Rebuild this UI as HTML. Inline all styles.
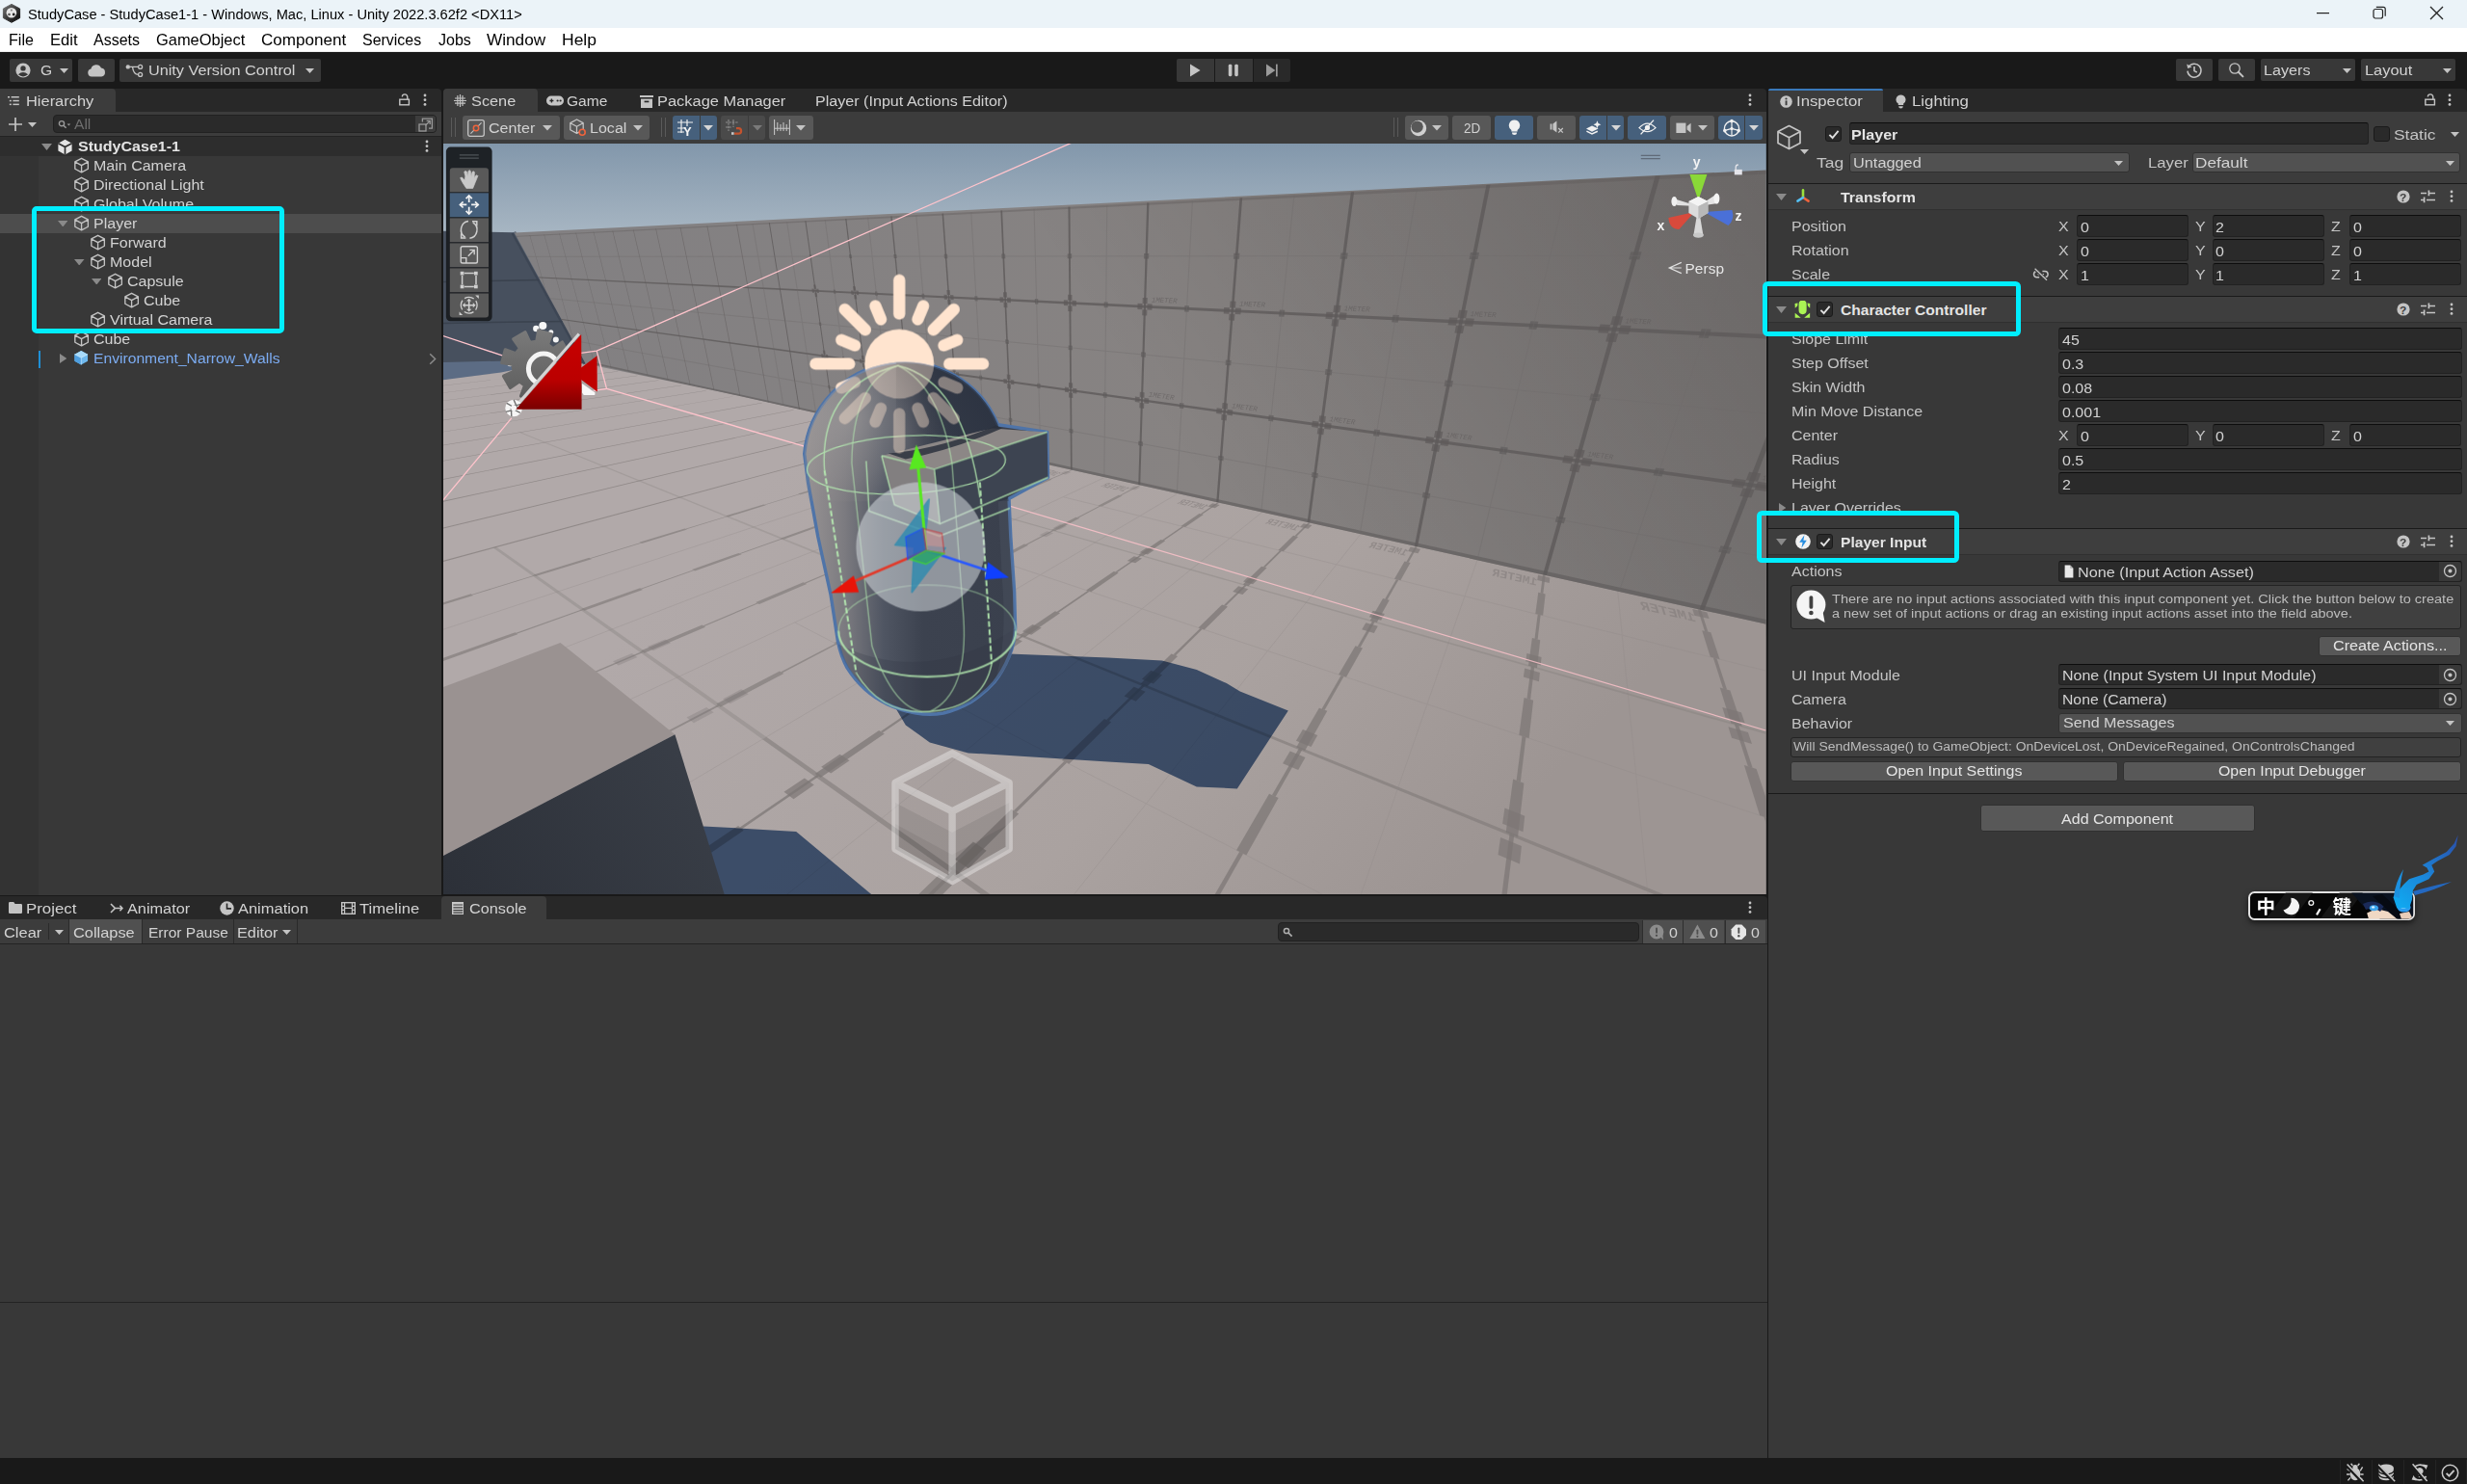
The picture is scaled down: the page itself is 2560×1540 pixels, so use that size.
<!DOCTYPE html>
<html><head><meta charset="utf-8"><title>Unity</title>
<style>
html,body{margin:0;padding:0;background:#191919}
body{width:2560px;height:1540px;position:relative;overflow:hidden;font-family:"Liberation Sans",sans-serif}
body>div,body>span,body>svg{position:absolute;display:block}
body>span{white-space:nowrap}
</style></head><body>
<div style="left:0px;top:0px;width:2560px;height:28.7px;background:#ebf3f8;"></div>
<svg style="left:0px;top:0px;" width="26" height="28" viewBox="0 0 26 28"><defs><linearGradient id="ulg" x1="0" y1="0" x2="1" y2="1"><stop offset="0" stop-color="#7a7a7a"/><stop offset=".5" stop-color="#3a3a3a"/><stop offset="1" stop-color="#050505"/></linearGradient></defs><path d="M12 4.4 20.6 9V18.6L12 23.3 3.4 18.6V9Z" fill="url(#ulg)" stroke="url(#ulg)" stroke-width="1" stroke-linejoin="round"/><circle cx="11.9" cy="13.2" r="5.3" fill="#e6e6e6"/><circle cx="11.9" cy="10.6" r="1.1" fill="#8a8a8a"/><circle cx="9.5" cy="15" r="1.3" fill="#555"/><circle cx="14.2" cy="15" r="1.4" fill="#252525"/></svg>
<span style="left:29.2px;top:5.3px;line-height:20px;font-size:15.2px;color:#000;transform:scaleX(0.9630);transform-origin:0 50%;">StudyCase - StudyCase1-1 - Windows, Mac, Linux - Unity 2022.3.62f2 &lt;DX11&gt;</span>
<svg style="left:2404px;top:13px;" width="14" height="2" viewBox="0 0 14 2"><rect width="13" height="1.2" fill="#222"/></svg>
<svg style="left:2462px;top:6px;" width="15" height="15" viewBox="0 0 15 15"><rect x="1" y="3.5" width="9.5" height="9.5" rx="2" fill="none" stroke="#222" stroke-width="1.2"/><path d="M3.8 1.3H11.2Q13.2 1.3 13.2 3.3V10.7" fill="none" stroke="#222" stroke-width="1.2"/></svg>
<svg style="left:2521px;top:6px;" width="15" height="15" viewBox="0 0 15 15"><path d="M1 1 14 14M14 1 1 14" stroke="#222" stroke-width="1.3"/></svg>
<div style="left:0px;top:28.7px;width:2560px;height:25.3px;background:#ffffff;"></div>
<div style="left:0px;top:52.8px;width:2560px;height:1.2px;background:#ededed;"></div>
<span style="left:8.5px;top:31.6px;line-height:20px;font-size:15.9px;color:#000;transform:scaleX(1.0110);transform-origin:0 50%;">File</span>
<span style="left:51.6px;top:31.6px;line-height:20px;font-size:15.9px;color:#000;transform:scaleX(1.0475);transform-origin:0 50%;">Edit</span>
<span style="left:97.2px;top:31.6px;line-height:20px;font-size:15.9px;color:#000;transform:scaleX(1.0060);transform-origin:0 50%;">Assets</span>
<span style="left:162.1px;top:31.6px;line-height:20px;font-size:15.9px;color:#000;transform:scaleX(1.0342);transform-origin:0 50%;">GameObject</span>
<span style="left:271.1px;top:31.6px;line-height:20px;font-size:15.9px;color:#000;transform:scaleX(1.0755);transform-origin:0 50%;">Component</span>
<span style="left:376.1px;top:31.6px;line-height:20px;font-size:15.9px;color:#000;transform:scaleX(1.0038);transform-origin:0 50%;">Services</span>
<span style="left:454.5px;top:31.6px;line-height:20px;font-size:15.9px;color:#000;transform:scaleX(1.0094);transform-origin:0 50%;">Jobs</span>
<span style="left:505px;top:31.6px;line-height:20px;font-size:15.9px;color:#000;transform:scaleX(1.0822);transform-origin:0 50%;">Window</span>
<span style="left:583.4px;top:31.6px;line-height:20px;font-size:15.9px;color:#000;transform:scaleX(1.1009);transform-origin:0 50%;">Help</span>
<div style="left:0px;top:54px;width:2560px;height:38px;background:#191919;"></div>
<div style="left:10px;top:61px;width:65px;height:23.5px;background:#383838;border-radius:2px"></div>
<svg style="left:16px;top:64.5px;" width="16" height="16" viewBox="0 0 16 16"><circle cx="8" cy="8" r="7.6" fill="#c4c4c4"/><circle cx="8" cy="5.9" r="2.7" fill="#383838"/><path d="M2.9 12.3Q8 7.6 13.1 12.3Q8 16.5 2.9 12.3Z" fill="#383838"/></svg>
<span style="left:42px;top:63px;line-height:20px;font-size:15px;color:#d2d2d2;transform:scaleX(1.0400);transform-origin:0 50%;">G</span>
<svg style="left:62px;top:70.5px;" width="9" height="5" viewBox="0 0 9 5"><path d="M0 0H9L4.5 5Z" fill="#c4c4c4"/></svg>
<div style="left:81px;top:61px;width:37.8px;height:23.5px;background:#383838;border-radius:2px"></div>
<svg style="left:90px;top:66px;" width="20" height="14" viewBox="0 0 20 14"><path d="M5 13.5a4 4 0 0 1-.6-7.9A5.6 5.6 0 0 1 15 4.6a4.5 4.5 0 0 1 .3 8.9Z" fill="#c4c4c4"/></svg>
<div style="left:124px;top:61px;width:208.8px;height:23.5px;background:#383838;border-radius:2px"></div>
<svg style="left:129.5px;top:65.5px;" width="19" height="15" viewBox="0 0 19 15"><circle cx="2.8" cy="3.4" r="2.2" fill="#c4c4c4"/><circle cx="15.6" cy="3.4" r="2" fill="none" stroke="#c4c4c4" stroke-width="1.3"/><circle cx="15.6" cy="11.4" r="2" fill="none" stroke="#c4c4c4" stroke-width="1.3"/><path d="M4.5 3.4H13.4M7.5 3.4Q8.5 11.4 13.4 11.4" fill="none" stroke="#c4c4c4" stroke-width="1.3"/></svg>
<span style="left:154.3px;top:63px;line-height:20px;font-size:15.4px;color:#d2d2d2;transform:scaleX(1.0543);transform-origin:0 50%;">Unity Version Control</span>
<svg style="left:317.2px;top:70.5px;" width="9" height="5" viewBox="0 0 9 5"><path d="M0 0H9L4.5 5Z" fill="#c4c4c4"/></svg>
<div style="left:1221px;top:60.5px;width:39px;height:24.3px;background:#383838;border-radius:2px 0 0 2px"></div>
<div style="left:1261px;top:60.5px;width:39px;height:24.3px;background:#383838;"></div>
<div style="left:1301px;top:60.5px;width:38.3px;height:24.3px;background:#292929;border-radius:0 2px 2px 0"></div>
<svg style="left:1234px;top:66px;" width="13" height="14" viewBox="0 0 13 14"><path d="M1 .6V13.4L11.6 7Z" fill="#c4c4c4"/></svg>
<svg style="left:1274px;top:66px;" width="12" height="14" viewBox="0 0 12 14"><rect x=".8" y=".8" width="3.6" height="12.4" rx="1.4" fill="#c4c4c4"/><rect x="7.2" y=".8" width="3.6" height="12.4" rx="1.4" fill="#c4c4c4"/></svg>
<svg style="left:1313px;top:66px;" width="14" height="14" viewBox="0 0 14 14"><path d="M1 .6V13.4L10.4 7Z" fill="#9a9a9a"/><rect x="11" y=".6" width="1.7" height="12.8" fill="#9a9a9a"/></svg>
<div style="left:2258px;top:61px;width:38px;height:23.2px;background:#383838;border-radius:2px"></div>
<svg style="left:2268px;top:64px;" width="18" height="18" viewBox="0 0 18 18"><path d="M3.2 5.2A7 7 0 1 1 2 9.6" fill="none" stroke="#c4c4c4" stroke-width="1.5"/><path d="M1.2 2.4 2.2 7 6.6 5.6Z" fill="#c4c4c4"/><path d="M9 5V9.6L11.8 11" fill="none" stroke="#c4c4c4" stroke-width="1.6"/></svg>
<div style="left:2302px;top:61px;width:38px;height:23.2px;background:#383838;border-radius:2px"></div>
<svg style="left:2312px;top:64px;" width="18" height="18" viewBox="0 0 18 18"><circle cx="7" cy="7" r="5.2" fill="none" stroke="#c4c4c4" stroke-width="1.3"/><path d="M10.8 10.8 15.4 15.4" stroke="#c4c4c4" stroke-width="2" stroke-linecap="round"/></svg>
<div style="left:2346px;top:61px;width:98px;height:23.2px;background:#383838;border-radius:2px"></div>
<span style="left:2349.4px;top:63.2px;line-height:20px;font-size:15.4px;color:#d2d2d2;transform:scaleX(1.0493);transform-origin:0 50%;">Layers</span>
<svg style="left:2431px;top:70.5px;" width="9" height="5" viewBox="0 0 9 5"><path d="M0 0H9L4.5 5Z" fill="#c4c4c4"/></svg>
<div style="left:2450px;top:61px;width:98px;height:23.2px;background:#383838;border-radius:2px"></div>
<span style="left:2453.5px;top:63.2px;line-height:20px;font-size:15.4px;color:#d2d2d2;transform:scaleX(1.0642);transform-origin:0 50%;">Layout</span>
<svg style="left:2534.8px;top:70.5px;" width="9" height="5" viewBox="0 0 9 5"><path d="M0 0H9L4.5 5Z" fill="#c4c4c4"/></svg>
<div style="left:0px;top:92px;width:2560px;height:1421px;background:#191919;"></div>
<div style="left:0px;top:92.1px;width:457.6px;height:23.9px;background:#282828;border-radius:0 4px 0 0"></div>
<div style="left:0px;top:92.1px;width:119.8px;height:23.9px;background:#3c3c3c;border-radius:0 4px 0 0"></div>
<svg style="left:8px;top:99px;" width="12" height="11" viewBox="0 0 12 11"><g fill="#c4c4c4"><rect x="0" y="1" width="2" height="1.5"/><rect x="3.6" y="1" width="8.2" height="1.5"/><rect x="1.8" y="4.8" width="2" height="1.5"/><rect x="5.4" y="4.8" width="6.4" height="1.5"/><rect x="1.8" y="8.6" width="2" height="1.5"/><rect x="5.4" y="8.6" width="6.4" height="1.5"/></g></svg>
<span style="left:27.2px;top:95.2px;line-height:20px;font-size:15.4px;color:#d2d2d2;transform:scaleX(1.0669);transform-origin:0 50%;">Hierarchy</span>
<svg style="left:414px;top:97px;" width="12" height="13" viewBox="0 0 12 13"><rect x=".8" y="6.2" width="9.6" height="5.6" fill="none" stroke="#c4c4c4" stroke-width="1.4"/><path d="M3.4 3.6Q3.4 .9 6 .9T8.8 3.8V6" fill="none" stroke="#c4c4c4" stroke-width="1.4"/></svg>
<svg style="left:439px;top:96.9px;" width="4" height="13.4" viewBox="0 0 4 13.4"><circle cx="2" cy="2" r="1.4" fill="#c4c4c4"/><circle cx="2" cy="6.7" r="1.4" fill="#c4c4c4"/><circle cx="2" cy="11.4" r="1.4" fill="#c4c4c4"/></svg>
<div style="left:0px;top:116px;width:457.6px;height:25.5px;background:#3c3c3c;"></div>
<div style="left:0px;top:141px;width:457.6px;height:1px;background:#232323;"></div>
<svg style="left:8px;top:120.8px;" width="16" height="16" viewBox="0 0 16 16"><path d="M8 1V15M1 8H15" stroke="#c4c4c4" stroke-width="1.7"/></svg>
<svg style="left:29px;top:126.5px;" width="9" height="5" viewBox="0 0 9 5"><path d="M0 0H9L4.5 5Z" fill="#c4c4c4"/></svg>
<div style="left:54.5px;top:119.3px;width:398.2px;height:18.7px;background:#2a2a2a;border-radius:4px;border:1px solid #212121;box-sizing:border-box"></div>
<svg style="left:60px;top:124px;" width="14" height="11" viewBox="0 0 14 11"><circle cx="4" cy="4.2" r="2.6" fill="none" stroke="#9a9a9a" stroke-width="1.4"/><path d="M6 6.2 8.6 8.8" stroke="#9a9a9a" stroke-width="1.5"/><path d="M9.6 4.4h3.6l-1.8 2z" fill="#9a9a9a"/></svg>
<span style="left:76.5px;top:119.4px;line-height:20px;font-size:15px;color:#6e6e6e;transform:scaleX(1.0400);transform-origin:0 50%;">All</span>
<div style="left:431px;top:120.3px;width:20.7px;height:16.7px;background:#3d3d3d;border-radius:0 3px 3px 0"></div>
<svg style="left:434px;top:121.5px;" width="16" height="15" viewBox="0 0 16 15"><rect x="1" y="7" width="7" height="7" fill="none" stroke="#9a9a9a" stroke-width="1.3"/><path d="M4.4 4.4V1.2H14.4V11.2H11" fill="none" stroke="#9a9a9a" stroke-width="1.3"/><path d="M7.4 8.2 12 3.6M8.6 3.4H12.2V7" fill="none" stroke="#9a9a9a" stroke-width="1.3"/></svg>
<div style="left:0px;top:142px;width:457.6px;height:786.5px;background:#383838;"></div>
<div style="left:0px;top:142px;width:40px;height:786.5px;background:#333333;"></div>
<div style="left:0px;top:142px;width:457.6px;height:19.5px;background:#2d2d2d;"></div>
<div style="left:0px;top:222px;width:457.6px;height:19.7px;background:#4d4d4d;"></div>
<svg style="left:42.7px;top:148.5px;" width="11" height="7" viewBox="0 0 11 7"><path d="M0 0H11L5.5 7Z" fill="#8a8a8a"/></svg>
<svg style="left:59px;top:143.5px;" width="17" height="17" viewBox="0 0 17 17"><path d="M8.5 .8 15.6 4.8V12.6L8.5 16.6 1.4 12.6V4.8Z" fill="#e4e4e4"/><path d="M8.5 8.6V16.6M8.5 8.6 1.4 4.8M8.5 8.6 15.6 4.8" stroke="#2d2d2d" stroke-width="1.7"/></svg>
<span style="left:80.7px;top:142.1px;line-height:20px;font-size:15.4px;color:#e4e4e4;font-weight:bold;transform:scaleX(1.0408);transform-origin:0 50%;">StudyCase1-1</span>
<svg style="left:441px;top:145.3px;" width="4" height="13.4" viewBox="0 0 4 13.4"><circle cx="2" cy="2" r="1.4" fill="#c4c4c4"/><circle cx="2" cy="6.7" r="1.4" fill="#c4c4c4"/><circle cx="2" cy="11.4" r="1.4" fill="#c4c4c4"/></svg>
<svg style="left:75.6px;top:162.9px;" width="17.2" height="17.2" viewBox="0 0 16 16"><path d="M8 1.2 14.3 4.6V11.4L8 14.8 1.7 11.4V4.6Z M1.9 4.7 8 8 14.1 4.7 M8 8V14.6" fill="none" stroke="#c4c4c4" stroke-width="1.25" stroke-linejoin="round"/></svg>
<span style="left:96.7px;top:162.2px;line-height:20px;font-size:15.4px;color:#d2d2d2;transform:scaleX(1.0400);transform-origin:0 50%;">Main Camera</span>
<svg style="left:75.6px;top:182.7px;" width="17.2" height="17.2" viewBox="0 0 16 16"><path d="M8 1.2 14.3 4.6V11.4L8 14.8 1.7 11.4V4.6Z M1.9 4.7 8 8 14.1 4.7 M8 8V14.6" fill="none" stroke="#c4c4c4" stroke-width="1.25" stroke-linejoin="round"/></svg>
<span style="left:96.7px;top:182px;line-height:20px;font-size:15.4px;color:#d2d2d2;transform:scaleX(1.0400);transform-origin:0 50%;">Directional Light</span>
<svg style="left:75.6px;top:202.5px;" width="17.2" height="17.2" viewBox="0 0 16 16"><path d="M8 1.2 14.3 4.6V11.4L8 14.8 1.7 11.4V4.6Z M1.9 4.7 8 8 14.1 4.7 M8 8V14.6" fill="none" stroke="#c4c4c4" stroke-width="1.25" stroke-linejoin="round"/></svg>
<span style="left:96.7px;top:201.8px;line-height:20px;font-size:15.4px;color:#d2d2d2;transform:scaleX(1.0400);transform-origin:0 50%;">Global Volume</span>
<svg style="left:75.6px;top:222.7px;" width="17.2" height="17.2" viewBox="0 0 16 16"><path d="M8 1.2 14.3 4.6V11.4L8 14.8 1.7 11.4V4.6Z M1.9 4.7 8 8 14.1 4.7 M8 8V14.6" fill="none" stroke="#c4c4c4" stroke-width="1.25" stroke-linejoin="round"/></svg>
<span style="left:96.7px;top:222px;line-height:20px;font-size:15.4px;color:#d2d2d2;transform:scaleX(1.0400);transform-origin:0 50%;">Player</span>
<svg style="left:59.85px;top:228.95px;" width="10.5" height="6.5" viewBox="0 0 10.5 6.5"><path d="M0 0H10.5L5.25 6.5Z" fill="#8a8a8a"/></svg>
<svg style="left:93.1px;top:242.8px;" width="17.2" height="17.2" viewBox="0 0 16 16"><path d="M8 1.2 14.3 4.6V11.4L8 14.8 1.7 11.4V4.6Z M1.9 4.7 8 8 14.1 4.7 M8 8V14.6" fill="none" stroke="#c4c4c4" stroke-width="1.25" stroke-linejoin="round"/></svg>
<span style="left:114.2px;top:242.1px;line-height:20px;font-size:15.4px;color:#d2d2d2;transform:scaleX(1.0400);transform-origin:0 50%;">Forward</span>
<svg style="left:93.1px;top:262.7px;" width="17.2" height="17.2" viewBox="0 0 16 16"><path d="M8 1.2 14.3 4.6V11.4L8 14.8 1.7 11.4V4.6Z M1.9 4.7 8 8 14.1 4.7 M8 8V14.6" fill="none" stroke="#c4c4c4" stroke-width="1.25" stroke-linejoin="round"/></svg>
<span style="left:114.2px;top:262px;line-height:20px;font-size:15.4px;color:#d2d2d2;transform:scaleX(1.0400);transform-origin:0 50%;">Model</span>
<svg style="left:77.35px;top:268.95px;" width="10.5" height="6.5" viewBox="0 0 10.5 6.5"><path d="M0 0H10.5L5.25 6.5Z" fill="#8a8a8a"/></svg>
<svg style="left:110.6px;top:282.7px;" width="17.2" height="17.2" viewBox="0 0 16 16"><path d="M8 1.2 14.3 4.6V11.4L8 14.8 1.7 11.4V4.6Z M1.9 4.7 8 8 14.1 4.7 M8 8V14.6" fill="none" stroke="#c4c4c4" stroke-width="1.25" stroke-linejoin="round"/></svg>
<span style="left:131.7px;top:282px;line-height:20px;font-size:15.4px;color:#d2d2d2;transform:scaleX(1.0400);transform-origin:0 50%;">Capsule</span>
<svg style="left:94.85px;top:288.95px;" width="10.5" height="6.5" viewBox="0 0 10.5 6.5"><path d="M0 0H10.5L5.25 6.5Z" fill="#8a8a8a"/></svg>
<svg style="left:128.1px;top:302.7px;" width="17.2" height="17.2" viewBox="0 0 16 16"><path d="M8 1.2 14.3 4.6V11.4L8 14.8 1.7 11.4V4.6Z M1.9 4.7 8 8 14.1 4.7 M8 8V14.6" fill="none" stroke="#c4c4c4" stroke-width="1.25" stroke-linejoin="round"/></svg>
<span style="left:149.2px;top:302px;line-height:20px;font-size:15.4px;color:#d2d2d2;transform:scaleX(1.0400);transform-origin:0 50%;">Cube</span>
<svg style="left:93.1px;top:322.7px;" width="17.2" height="17.2" viewBox="0 0 16 16"><path d="M8 1.2 14.3 4.6V11.4L8 14.8 1.7 11.4V4.6Z M1.9 4.7 8 8 14.1 4.7 M8 8V14.6" fill="none" stroke="#c4c4c4" stroke-width="1.25" stroke-linejoin="round"/></svg>
<span style="left:114.2px;top:322px;line-height:20px;font-size:15.4px;color:#d2d2d2;transform:scaleX(1.0400);transform-origin:0 50%;">Virtual Camera</span>
<svg style="left:75.6px;top:342.7px;" width="17.2" height="17.2" viewBox="0 0 16 16"><path d="M8 1.2 14.3 4.6V11.4L8 14.8 1.7 11.4V4.6Z M1.9 4.7 8 8 14.1 4.7 M8 8V14.6" fill="none" stroke="#c4c4c4" stroke-width="1.25" stroke-linejoin="round"/></svg>
<span style="left:96.7px;top:342px;line-height:20px;font-size:15.4px;color:#d2d2d2;transform:scaleX(1.0400);transform-origin:0 50%;">Cube</span>
<div style="left:40px;top:364px;width:2px;height:18px;background:#1f8fd6;"></div>
<svg style="left:61.85px;top:367px;" width="7.5" height="10" viewBox="0 0 7.5 10"><path d="M0 0V10L7.5 5Z" fill="#8a8a8a"/></svg>
<svg style="left:75.9px;top:363.4px;" width="16.5" height="16.5" viewBox="0 0 16 16"><path d="M8 1 14.6 4.5V11.5L8 15 1.4 11.5V4.5Z" fill="#6fb9ee"/><path d="M8 1 14.6 4.5 8 8 1.4 4.5Z" fill="#a7dbfb"/><path d="M8 8V15L1.4 11.5V4.5Z" fill="#4f9fe0"/><path d="M1.4 4.5 8 8 14.6 4.5M8 8V15" stroke="#d8f0ff" stroke-width=".6" fill="none"/></svg>
<span style="left:96.5px;top:362px;line-height:20px;font-size:15.4px;color:#7cacf2;transform:scaleX(1.0175);transform-origin:0 50%;">Environment_Narrow_Walls</span>
<svg style="left:445px;top:365.5px;" width="8" height="13" viewBox="0 0 8 13"><path d="M1.2 1.2 6.6 6.5 1.2 11.8" fill="none" stroke="#8a8a8a" stroke-width="1.5"/></svg>
<div style="left:32.6px;top:214px;width:262.4px;height:132.1px;border:5.2px solid #00eeff;border-radius:5px;box-sizing:border-box"></div>
<svg style="left:460.2px;top:148.6px" width="1372.6" height="779.6" viewBox="460.2 148.6 1372.6 779.6"><defs><linearGradient id="sky" x1="0" y1="0" x2="0" y2="1"><stop offset="0" stop-color="#8297ab"/><stop offset="1" stop-color="#abb9c5"/></linearGradient><linearGradient id="wall" gradientUnits="userSpaceOnUse" x1="534" y1="0" x2="1833" y2="0"><stop offset="0" stop-color="#828082"/><stop offset=".55" stop-color="#878382"/><stop offset="1" stop-color="#858180"/></linearGradient><linearGradient id="walld" gradientUnits="userSpaceOnUse" x1="1800" y1="170" x2="1250" y2="520"><stop offset="0" stop-color="#000" stop-opacity=".2"/><stop offset=".5" stop-color="#000" stop-opacity=".1"/><stop offset="1" stop-color="#000" stop-opacity="0"/></linearGradient><linearGradient id="floor" gradientUnits="userSpaceOnUse" x1="900" y1="380" x2="1500" y2="928"><stop offset="0" stop-color="#b1a9a9"/><stop offset=".6" stop-color="#aaa2a0"/><stop offset="1" stop-color="#9d9593"/></linearGradient><linearGradient id="cubef" gradientUnits="userSpaceOnUse" x1="460" y1="928" x2="720" y2="780"><stop offset="0" stop-color="#2c3038"/><stop offset="1" stop-color="#393e47"/></linearGradient><linearGradient id="caps" gradientUnits="userSpaceOnUse" x1="840" y1="0" x2="1055" y2="0"><stop offset="0" stop-color="#959192"/><stop offset=".17" stop-color="#7c7b80"/><stop offset=".36" stop-color="#4f5562"/><stop offset=".55" stop-color="#3c424f"/><stop offset="1" stop-color="#3a404d"/></linearGradient><radialGradient id="dome" gradientUnits="userSpaceOnUse" cx="878" cy="435" r="175"><stop offset="0" stop-color="#979394"/><stop offset=".38" stop-color="#828085"/><stop offset=".72" stop-color="#4c5260"/><stop offset="1" stop-color="#2f3644"/></radialGradient><linearGradient id="redcam" x1="0" y1="0" x2="0" y2="1"><stop offset="0" stop-color="#c80000"/><stop offset=".6" stop-color="#bb0000"/><stop offset="1" stop-color="#7a0000"/></linearGradient><linearGradient id="gear" x1="0" y1="0" x2="0" y2="1"><stop offset="0" stop-color="#7a7a7a"/><stop offset="1" stop-color="#5c5c5c"/></linearGradient><clipPath id="floorclip"><path d="M460 376 608 377 741.16,404.79 1182.44,502.82 1766.05,632.48 1882.12,658.27 1833 928 460 928Z"/></clipPath><clipPath id="wallclip"><path d="M534 241 1833 176 1833 660 1882.12,658.27 1766.05,632.48 1182.44,502.82 741.16,404.79 608 377Z"/></clipPath></defs><rect x="460" y="148" width="1373" height="104" fill="url(#sky)"/><rect x="460" y="251" width="1373" height="60" fill="#abb9c5"/><rect x="460" y="300" width="1373" height="628" fill="url(#floor)"/><g fill="#7c7675" clip-path="url(#floorclip)"><polygon points="374.13,326.53 374.3,326.56 -299.92,360.7 -299.57,360.61" opacity="0.4"/><polygon points="379.6,327.72 379.78,327.76 -310.95,363.54 -310.59,363.45" opacity="0.4"/><polygon points="385.27,328.96 385.46,329.01 -322.65,366.55 -322.26,366.45" opacity="0.4"/><polygon points="391.17,330.26 391.36,330.3 -335.06,369.75 -334.65,369.64" opacity="0.4"/><polygon points="397.3,331.6 397.5,331.64 -348.26,373.15 -347.82,373.03" opacity="0.4"/><polygon points="403.68,332.99 403.89,333.04 -362.32,376.76 -361.85,376.64" opacity="0.4"/><polygon points="410.32,334.45 410.53,334.49 -377.34,380.63 -376.84,380.5" opacity="0.4"/><polygon points="417.24,335.96 417.46,336.01 -393.4,384.76 -392.86,384.62" opacity="0.4"/><polygon points="424.45,337.54 424.69,337.59 -410.63,389.2 -410.05,389.05" opacity="0.4"/><polygon points="431.99,339.19 432.24,339.25 -429.16,393.96 -428.54,393.8" opacity="0.4"/><polygon points="439.86,340.91 440.12,340.97 -449.13,399.1 -448.46,398.93" opacity="0.4"/><polygon points="448.1,342.72 448.37,342.78 -470.73,404.66 -470.01,404.48" opacity="0.4"/><polygon points="456.72,344.61 457,344.67 -494.16,410.69 -493.38,410.49" opacity="0.4"/><polygon points="465.76,346.58 466.06,346.65 -519.67,417.26 -518.81,417.04" opacity="0.4"/><polygon points="475.24,348.66 475.56,348.73 -547.55,424.43 -546.61,424.19" opacity="0.4"/><polygon points="485.21,350.84 485.54,350.91 -578.13,432.3 -577.1,432.04" opacity="0.4"/><polygon points="495.69,353.14 496.04,353.21 -611.84,440.98 -610.7,440.69" opacity="0.4"/><polygon points="506.73,355.55 507.1,355.63 -649.18,450.59 -647.91,450.26" opacity="0.4"/><polygon points="518.38,358.1 518.77,358.19 -690.77,461.29 -689.35,460.93" opacity="0.4"/><polygon points="530.68,360.8 531.09,360.89 -737.38,473.29 -735.78,472.88" opacity="0.4"/><polygon points="543.7,363.65 544.13,363.74 -789.97,486.82 -788.17,486.36" opacity="0.4"/><polygon points="557.49,366.67 557.95,366.77 -849.78,502.22 -847.72,501.69" opacity="0.4"/><polygon points="572.14,369.87 572.63,369.98 -918.41,519.88 -916.03,519.27" opacity="0.4"/><polygon points="587.71,373.28 588.23,373.4 -997.95,540.35 -995.18,539.64" opacity="0.4"/><polygon points="604.3,376.92 604.86,377.04 -1091.23,564.36 -1087.97,563.52" opacity="0.4"/><polygon points="622.02,380.79 622.62,380.92 -1202.16,592.91 -1198.25,591.9" opacity="0.62"/><polygon points="640.99,384.95 641.62,385.08 -1336.27,627.42 -1331.5,626.19" opacity="0.62"/><polygon points="661.33,389.4 662.01,389.55 -1501.66,669.98 -1495.72,668.45" opacity="0.62"/><polygon points="683.21,394.19 683.94,394.35 -1710.73,723.79 -1703.12,721.83" opacity="0.62"/><polygon points="706.8,399.35 707.6,399.53 -1983.41,793.97 -1973.31,791.37" opacity="0.62"/><polygon points="732.32,404.94 733.18,405.13 -2353.95,889.33 -2339.91,885.72" opacity="0.62"/><polygon points="760.02,411 760.95,411.21 -2886.53,1026.39 -2865.72,1021.04" opacity="0.62"/><polygon points="790.17,417.61 791.19,417.83 -3717.21,1240.18 -3683.18,1231.42" opacity="0.62"/><polygon points="823.13,424.82 824.25,425.07 -5193.53,1620.12 -5128.14,1603.29" opacity="0.62"/><polygon points="859.31,432.74 860.54,433.01 -8546.67,2483.09 -8373.09,2438.41" opacity="0.62"/><polygon points="899.2,441.47 900.56,441.77 -23599.28,6357.03 -22336.06,6031.93" opacity="0.62"/><polygon points="943.4,451.15 944.91,451.48 -23574.79,7087.68 -22170.49,6682.52" opacity="0.62"/><polygon points="993.03,462.02 993.97,462.22 971.39,469.17 970.44,468.95" opacity="0.6"/><polygon points="969.65,468.77 972.18,469.35 947.97,476.81 945.42,476.18" opacity="0.6"/><polygon points="946.22,476.38 947.17,476.62 921.15,484.62 920.19,484.37" opacity="0.6"/><polygon points="919.39,484.16 921.95,484.83 893.92,493.48 891.34,492.74" opacity="0.6"/><polygon points="892.15,492.97 893.11,493.25 862.81,502.57 861.84,502.27" opacity="0.6"/><polygon points="861.04,502.02 863.62,502.82 830.76,512.94 828.19,512.08" opacity="0.6"/><polygon points="828.99,512.35 829.96,512.67 794.22,523.66 793.26,523.31" opacity="0.6"/><polygon points="792.47,523.02 795.02,523.96 755.99,535.99 753.47,534.96" opacity="0.6"/><polygon points="754.26,535.28 755.2,535.67 712.43,548.82 711.5,548.4" opacity="0.6"/><polygon points="710.73,548.05 713.21,549.18 666.09,563.7 663.68,562.46" opacity="0.6"/><polygon points="664.43,562.84 665.33,563.31 613.22,579.34 612.35,578.82" opacity="0.6"/><polygon points="611.63,578.39 613.94,579.77 555.93,597.66 553.75,596.12" opacity="0.6"/><polygon points="554.43,596.6 555.24,597.17 490.36,617.13 489.61,616.48" opacity="0.6"/><polygon points="488.99,615.95 490.98,617.67 417.79,640.23 416.06,638.28" opacity="0.6"/><polygon points="416.6,638.89 417.25,639.62 334.25,665.15 333.72,664.32" opacity="0.6"/><polygon points="333.29,663.62 334.68,665.85 239.49,695.19 238.56,692.63" opacity="0.6"/><polygon points="238.85,693.43 239.2,694.39 129.27,728.2 129.16,727.08" opacity="0.6"/><polygon points="129.07,726.16 129.37,729.13 0.51,768.85 1.07,765.35" opacity="0.6"/><polygon points="0.9,766.44 0.69,767.75 -151.76,814.64 -151.09,813.08" opacity="0.6"/><polygon points="-150.54,811.78 -152.31,815.96 -336.47,872.72 -332.99,867.64" opacity="0.6"/><polygon points="-334.07,869.22 -335.37,871.12 -560.82,940.47 -558.58,938.11" opacity="0.6"/><polygon points="-556.73,936.15 -562.69,942.45 -847.27,1030.16 -837.57,1022.15" opacity="0.6"/><polygon points="-840.58,1024.64 -844.21,1027.64 -1211.21,1140.53 -1205.39,1136.57" opacity="0.6"/><polygon points="-1200.57,1133.3 -1216.11,1143.85 -1713.14,1297.05 -1687.97,1282.55" opacity="0.6"/><polygon points="-1695.76,1287.04 -1705.2,1292.48 -2405.87,1508 -2390,1500.06" opacity="0.6"/><polygon points="-2376.94,1493.51 -2419.25,1514.7 -3501.51,1848.29 -3425.08,1814.46" opacity="0.6"/><polygon points="-3448.61,1824.88 -3477.27,1837.56 -5319.46,2404.21 -5260.49,2380.83" opacity="0.6"/><polygon points="-5212.33,2361.73 -5369.6,2424.09 -9367.25,3656.29 -8946.21,3505.07" opacity="0.6"/><polygon points="-9073.7,3550.86 -9231.52,3607.54 -23174.46,7896.34 -22294.24,7607.4" opacity="0.6"/><polygon points="1048.31,474.12 1049.37,474.35 1027.4,482.18 1026.33,481.93" opacity="0.6"/><polygon points="1025.44,481.73 1028.3,482.39 1004.66,490.84 1001.77,490.12" opacity="0.6"/><polygon points="1002.67,490.35 1003.75,490.62 978.22,499.72 977.13,499.43" opacity="0.6"/><polygon points="976.21,499.19 979.14,499.96 951.49,509.85 948.54,509.01" opacity="0.6"/><polygon points="949.46,509.27 950.57,509.58 920.51,520.3 919.4,519.96" opacity="0.6"/><polygon points="918.47,519.68 921.44,520.59 888.67,532.3 885.69,531.31" opacity="0.6"/><polygon points="886.62,531.62 887.74,531.99 851.85,544.79 850.74,544.38" opacity="0.6"/><polygon points="849.8,544.04 852.79,545.13 813.33,559.24 810.35,558.03" opacity="0.6"/><polygon points="811.28,558.41 812.4,558.86 768.8,574.41 767.69,573.91" opacity="0.6"/><polygon points="766.78,573.49 769.72,574.83 721.28,592.15 718.4,590.66" opacity="0.6"/><polygon points="719.29,591.12 720.38,591.68 666.28,610.97 665.24,610.35" opacity="0.6"/><polygon points="664.37,609.83 667.16,611.49 606.3,633.25 603.64,631.37" opacity="0.6"/><polygon points="604.46,631.96 605.46,632.66 536.57,657.23 535.65,656.43" opacity="0.6"/><polygon points="534.88,655.76 537.34,657.9 458.58,686.06 456.39,683.61" opacity="0.6"/><polygon points="457.07,684.37 457.89,685.29 367.18,717.65 366.51,716.58" opacity="0.6"/><polygon points="365.95,715.7 367.74,718.54 261.82,756.4 260.6,753.07" opacity="0.6"/><polygon points="260.98,754.11 261.44,755.36 136.6,799.88 136.45,798.39" opacity="0.6"/><polygon points="136.32,797.16 136.73,801.12 -13.25,854.74 -12.49,849.96" opacity="0.6"/><polygon points="-12.73,851.44 -13.01,853.24 -195.6,918.35 -194.67,916.14" opacity="0.6"/><polygon points="-193.89,914.31 -196.38,920.21 -425.01,1001.94 -419.91,994.5" opacity="0.6"/><polygon points="-421.5,996.81 -423.41,999.6 -715.61,1103.81 -712.17,1100.18" opacity="0.6"/><polygon points="-709.32,1097.18 -718.5,1106.86 -1109.02,1246.47 -1093.13,1233.34" opacity="0.6"/><polygon points="-1098.05,1237.41 -1104,1242.33 -1645.45,1435.43 -1635.07,1428.38" opacity="0.6"/><polygon points="-1626.52,1422.57 -1654.2,1441.37 -2468.62,1732.52 -2418.11,1703.41" opacity="0.6"/><polygon points="-2433.68,1712.38 -2452.62,1723.3 -3784.71,2198.38 -3746.51,2179.25" opacity="0.6"/><polygon points="-3715.25,2163.6 -3817.12,2214.61 -6481.39,3167.08 -6229.46,3055.58" opacity="0.6"/><polygon points="-6306.08,3089.49 -6400.53,3131.29 -13881.43,5799.29 -13494.06,5645.68" opacity="0.6"/><polygon points="-13187.3,5524.04 -14221.53,5934.15 -17955.59,7269.06 -16371.36,6653.67" opacity="0.6"/><polygon points="1110.72,487.78 1111.92,488.04 1090.95,496.94 1089.73,496.66" opacity="0.6"/><polygon points="1088.71,496.42 1091.96,497.18 1069.29,506.83 1065.98,506.01" opacity="0.6"/><polygon points="1067.01,506.26 1068.25,506.57 1043.62,517.02 1042.35,516.69" opacity="0.6"/><polygon points="1041.31,516.41 1044.67,517.3 1017.85,528.72 1014.43,527.75" opacity="0.6"/><polygon points="1015.5,528.05 1016.78,528.41 987.43,540.87 986.13,540.47" opacity="0.6"/><polygon points="985.05,540.14 988.51,541.2 956.29,554.91 952.79,553.74" opacity="0.6"/><polygon points="953.88,554.1 955.19,554.54 919.63,569.63 918.31,569.15" opacity="0.6"/><polygon points="917.21,568.74 920.74,570.04 881.31,586.81 877.76,585.37" opacity="0.6"/><polygon points="878.87,585.82 880.2,586.36 836.23,605.02 834.9,604.42" opacity="0.6"/><polygon points="833.79,603.91 837.34,605.52 787.99,626.52 784.47,624.71" opacity="0.6"/><polygon points="785.57,625.28 786.89,625.96 731.12,649.62 729.83,648.85" opacity="0.6"/><polygon points="728.75,648.21 732.2,650.26 668.64,677.31 665.31,674.96" opacity="0.6"/><polygon points="666.35,675.69 667.6,676.57 594.57,707.56 593.39,706.54" opacity="0.6"/><polygon points="592.42,705.69 595.55,708.41 510.62,744.55 507.8,741.38" opacity="0.6"/><polygon points="508.67,742.36 509.73,743.55 409.98,785.88 409.09,784.47" opacity="0.6"/><polygon points="408.36,783.3 410.72,787.06 291.5,837.79 289.86,833.27" opacity="0.6"/><polygon points="290.37,834.68 290.98,836.37 146.59,897.63 146.38,895.56" opacity="0.6"/><polygon points="146.21,893.84 146.77,899.37 -32.64,975.72 -31.53,968.79" opacity="0.6"/><polygon points="-31.88,970.94 -32.3,973.54 -259.73,1070.04 -258.31,1066.69" opacity="0.6"/><polygon points="-257.14,1063.92 -260.91,1072.85 -561.14,1200.6 -552.95,1188.65" opacity="0.6"/><polygon points="-555.49,1192.35 -558.56,1196.83 -968.67,1370.84 -962.7,1364.55" opacity="0.6"/><polygon points="-957.78,1359.36 -973.69,1376.15 -1576.14,1632.5 -1545.5,1607.18" opacity="0.6"/><polygon points="-1554.95,1614.99 -1566.44,1624.48 -2518.91,2028.62 -2495.45,2012.69" opacity="0.6"/><polygon points="-2476.22,1999.63 -2538.79,2042.12 -4322.41,2801.08 -4173.93,2715.49" opacity="0.6"/><polygon points="-4219.24,2741.61 -4274.91,2773.7 -8593.13,4605.94 -8403.19,4510.84" opacity="0.6"/><polygon points="-8251.15,4434.71 -8758.04,4688.51 -17134.22,8252.7 -15430.75,7462.09" opacity="0.6"/><polygon points="1181.75,503.33 1183.12,503.63 1163.64,513.83 1162.24,513.5" opacity="0.6"/><polygon points="1161.08,513.23 1164.81,514.1 1143.65,525.22 1139.82,524.28" opacity="0.6"/><polygon points="1141.02,524.57 1142.45,524.93 1119.3,537.05 1117.83,536.66" opacity="0.6"/><polygon points="1116.61,536.34 1120.53,537.37 1095.16,550.7 1091.16,549.57" opacity="0.6"/><polygon points="1092.41,549.92 1093.91,550.35 1065.94,565 1064.4,564.52" opacity="0.6"/><polygon points="1063.13,564.13 1067.22,565.39 1036.27,581.65 1032.1,580.26" opacity="0.6"/><polygon points="1033.4,580.69 1034.97,581.21 1000.49,599.27 998.9,598.68" opacity="0.6"/><polygon points="997.57,598.2 1001.82,599.76 963.23,620.04 958.92,618.29" opacity="0.6"/><polygon points="960.26,618.83 961.88,619.49 918.33,642.29 916.7,641.55" opacity="0.6"/><polygon points="915.34,640.93 919.7,642.91 870.23,668.91 865.85,666.65" opacity="0.6"/><polygon points="867.21,667.35 868.85,668.2 812.13,697.91 810.49,696.93" opacity="0.6"/><polygon points="809.14,696.12 813.5,698.72 747.8,733.25 743.51,730.22" opacity="0.6"/><polygon points="744.85,731.16 746.45,732.3 669.51,772.59 667.97,771.25" opacity="0.6"/><polygon points="666.69,770.14 670.8,773.71 579.34,821.78 575.54,817.51" opacity="0.6"/><polygon points="576.72,818.84 578.15,820.44 467.88,878.18 466.66,876.23" opacity="0.6"/><polygon points="465.64,874.62 468.9,879.81 332.9,951.29 330.54,944.82" opacity="0.6"/><polygon points="331.27,946.83 332.16,949.25 161.03,1038.87 160.72,1035.77" opacity="0.6"/><polygon points="160.45,1033.21 161.3,1041.47 -61.99,1158.81 -60.24,1147.9" opacity="0.6"/><polygon points="-60.78,1151.28 -61.44,1155.37 -362.44,1312.99 -360.04,1307.33" opacity="0.6"/><polygon points="-358.07,1302.66 -364.45,1317.75 -797.27,1545.21 -782.04,1522.98" opacity="0.6"/><polygon points="-786.74,1529.84 -792.45,1538.18 -1457.06,1886.21 -1444.29,1872.73" opacity="0.6"/><polygon points="-1433.8,1861.67 -1467.87,1897.62 -2646.41,2516.96 -2564.41,2449.2" opacity="0.6"/><polygon points="-2589.5,2469.93 -2620.24,2495.34 -5179.78,3835.69 -5084.63,3771.07" opacity="0.6"/><polygon points="-5007.93,3718.98 -5261.79,3891.39 -11835.17,7345.8 -10777.92,6717.38" opacity="0.6"/><polygon points="1263.31,521.19 1264.89,521.53 1247.63,533.34 1246,532.96" opacity="0.72"/><polygon points="1244.65,532.65 1248.99,533.65 1230.12,546.62 1225.65,545.51" opacity="0.72"/><polygon points="1227.04,545.85 1228.72,546.27 1207.91,560.5 1206.18,560.04" opacity="0.72"/><polygon points="1204.75,559.66 1209.36,560.88 1186.4,576.65 1181.65,575.3" opacity="0.72"/><polygon points="1183.13,575.72 1184.91,576.22 1159.35,593.7 1157.51,593.14" opacity="0.72"/><polygon points="1155.99,592.67 1160.89,594.18 1132.36,613.77 1127.31,612.09" opacity="0.72"/><polygon points="1128.88,612.61 1130.78,613.24 1098.62,635.23 1096.67,634.52" opacity="0.72"/><polygon points="1095.05,633.92 1100.25,635.83 1063.84,660.84 1058.49,658.67" opacity="0.72"/><polygon points="1060.16,659.35 1062.17,660.16 1020.49,688.66 1018.43,687.73" opacity="0.72"/><polygon points="1016.72,686.95 1022.21,689.44 974.14,722.47 968.53,719.58" opacity="0.72"/><polygon points="970.28,720.47 972.38,721.56 916.23,759.96 914.1,758.68" opacity="0.72"/><polygon points="912.33,757.63 918.02,761.02 851.63,806.63 845.91,802.59" opacity="0.72"/><polygon points="847.69,803.85 849.84,805.36 770.11,859.88 768,858.05" opacity="0.72"/><polygon points="766.24,856.53 771.88,861.42 674.28,928.47 668.9,922.43" opacity="0.72"/><polygon points="670.57,924.3 672.59,926.57 550.57,1010.01 548.77,1007.14" opacity="0.72"/><polygon points="547.28,1004.76 552.08,1012.42 394.65,1120.57 391,1110.57" opacity="0.72"/><polygon points="392.13,1113.67 393.5,1117.42 183.73,1260.87 183.2,1255.76" opacity="0.72"/><polygon points="182.77,1251.54 184.17,1265.17 -111.6,1468.36 -108.45,1448.7" opacity="0.72"/><polygon points="-109.43,1454.77 -110.61,1462.15 -553.54,1765.04 -548.66,1753.49" opacity="0.72"/><polygon points="-544.65,1744 -557.67,1774.8 -1307.62,2290 -1269.95,2235.03" opacity="0.72"/><polygon points="-1281.5,2251.88 -1295.62,2272.5 -2794.39,3297.41 -2750.09,3250.66" opacity="0.72"/><polygon points="-2714.2,3212.79 -2832.38,3337.5 -7615.88,6623.69 -6996.95,6112.21" opacity="0.72"/><polygon points="-7179.4,6262.99 -7411.15,6454.5 -9789.8,8081.1 -9407.38,7778.21" opacity="0.72"/><polygon points="1357.94,541.9 1359.78,542.3 1345.75,556.13 1343.84,555.68" opacity="0.72"/><polygon points="1342.25,555.32 1347.34,556.5 1331.92,571.8 1326.62,570.49" opacity="0.72"/><polygon points="1328.27,570.9 1330.26,571.39 1313.07,588.32 1311,587.77" opacity="0.72"/><polygon points="1309.29,587.32 1314.8,588.78 1295.69,607.73 1289.95,606.1" opacity="0.72"/><polygon points="1291.74,606.6 1293.89,607.22 1272.36,628.43 1270.11,627.74" opacity="0.72"/><polygon points="1268.25,627.17 1274.23,629.01 1249.95,653.09 1243.71,651" opacity="0.72"/><polygon points="1245.65,651.65 1247.99,652.43 1220.22,679.8 1217.77,678.91" opacity="0.72"/><polygon points="1215.74,678.16 1222.26,680.55 1190.39,712.16 1183.57,709.4" opacity="0.72"/><polygon points="1185.69,710.26 1188.25,711.3 1151.06,747.93 1148.39,746.72" opacity="0.72"/><polygon points="1146.18,745.71 1153.3,748.95 1109.6,792.28 1102.17,788.45" opacity="0.72"/><polygon points="1104.48,789.64 1107.27,791.08 1054.94,842.63 1052.03,840.9" opacity="0.72"/><polygon points="1049.63,839.47 1057.37,844.08 993.82,907.11 985.8,901.45" opacity="0.72"/><polygon points="988.29,903.21 991.3,905.33 912.24,983.21 909.17,980.55" opacity="0.72"/><polygon points="906.62,978.34 914.82,985.45 813.98,1085.46 805.79,1076.25" opacity="0.72"/><polygon points="808.33,1079.11 811.4,1082.56 678.33,1213.67 675.41,1209.03" opacity="0.72"/><polygon points="673.01,1205.19 680.77,1217.57 496.64,1400.19 490.25,1382.67" opacity="0.72"/><polygon points="492.22,1388.09 494.62,1394.66 224.6,1660.68 223.57,1650.67" opacity="0.72"/><polygon points="222.73,1642.44 225.46,1669.13 -213.57,2104.54 -206.28,2059.04" opacity="0.72"/><polygon points="-208.52,2073.02 -211.25,2090.08 -1033.36,2900.02 -1018.41,2864.64" opacity="0.72"/><polygon points="-1006.25,2835.87 -1046.14,2930.24 -3231.24,5097.32 -3024.78,4796.01" opacity="0.72"/><polygon points="-3086.48,4886.06 -3163.83,4998.94 -5408.63,7210.5 -5218.79,6970.26" opacity="0.72"/><polygon points="1469.03,566.22 1471.21,566.7 1461.9,583.11 1459.62,582.58" opacity="0.72"/><polygon points="1457.72,582.14 1463.8,583.55 1453.52,601.88 1447.14,600.31" opacity="0.72"/><polygon points="1449.13,600.8 1451.52,601.39 1439.89,621.88 1437.38,621.21" opacity="0.72"/><polygon points="1435.29,620.66 1441.99,622.43 1428.98,645.63 1421.92,643.62" opacity="0.72"/><polygon points="1424.12,644.25 1426.76,645 1411.84,671.3 1409.04,670.44" opacity="0.72"/><polygon points="1406.71,669.73 1414.18,672.02 1397.18,702.31 1389.27,699.67" opacity="0.72"/><polygon points="1391.74,700.49 1394.7,701.48 1374.84,736.47 1371.69,735.32" opacity="0.72"/><polygon points="1369.07,734.36 1377.48,737.44 1354.35,778.67 1345.38,775.03" opacity="0.72"/><polygon points="1348.17,776.16 1351.54,777.52 1323.82,826.35 1320.22,824.72" opacity="0.72"/><polygon points="1317.23,823.36 1326.84,827.72 1293.54,887.08 1283.22,881.76" opacity="0.72"/><polygon points="1286.43,883.41 1290.3,885.41 1248.94,958.27 1244.76,955.78" opacity="0.72"/><polygon points="1241.31,953.72 1252.44,960.36 1200.41,1053.11 1188.38,1044.61" opacity="0.72"/><polygon points="1192.11,1047.24 1196.62,1050.43 1128.34,1170.72 1123.46,1166.49" opacity="0.72"/><polygon points="1119.43,1162.99 1132.44,1174.28 1039.87,1339.31 1025.89,1323.6" opacity="0.72"/><polygon points="1030.21,1328.46 1035.45,1334.35 901.76,1569.86 896.27,1561.11" opacity="0.72"/><polygon points="891.75,1553.91 906.4,1577.25 697.23,1950.14 683.27,1911.87" opacity="0.72"/><polygon points="687.56,1923.64 692.8,1937.99 320.07,2594.6 317.23,2566.9" opacity="0.72"/><polygon points="314.92,2544.31 322.48,2618.21 -543.27,4161.58 -511.47,3963.21" opacity="0.72"/><polygon points="-521.05,4023 -532.97,4097.35 -1904.95,6514.27 -1842.92,6319.08" opacity="0.72"/><polygon points="1601.32,595.18 1603.93,595.75 1601.55,615.55 1598.79,614.91" opacity="0.72"/><polygon points="1596.49,614.37 1603.86,616.09 1601.32,638.45 1593.51,636.51" opacity="0.72"/><polygon points="1595.94,637.12 1598.87,637.84 1595.83,663.14 1592.71,662.31" opacity="0.72"/><polygon points="1590.12,661.63 1598.44,663.83 1595.15,692.88 1586.24,690.35" opacity="0.72"/><polygon points="1589.01,691.14 1592.35,692.09 1588.33,725.54 1584.74,724.44" opacity="0.72"/><polygon points="1581.76,723.52 1591.33,726.47 1586.88,765.73 1576.53,762.27" opacity="0.72"/><polygon points="1579.75,763.35 1583.63,764.65 1578.06,810.96 1573.84,809.41" opacity="0.72"/><polygon points="1570.34,808.13 1581.6,812.25 1575.24,868.25 1562.9,863.25" opacity="0.72"/><polygon points="1566.73,864.8 1571.36,866.68 1563.15,934.99 1558.03,932.67" opacity="0.72"/><polygon points="1553.79,930.74 1567.44,936.94 1557.65,1023.2 1542.37,1015.32" opacity="0.72"/><polygon points="1547.11,1017.77 1552.84,1020.72 1539.53,1131.48 1533.02,1127.61" opacity="0.72"/><polygon points="1527.65,1124.4 1544.99,1134.74 1527.98,1284.6 1507.93,1270.44" opacity="0.72"/><polygon points="1514.14,1274.82 1521.66,1280.13 1496.41,1490.11 1487.51,1482.39" opacity="0.72"/><polygon points="1480.18,1476.03 1503.91,1496.62 1467.25,1819.6 1438.21,1786.96" opacity="0.72"/><polygon points="1447.16,1797.01 1458.05,1809.25 1392.73,2352.55 1378.75,2330.27" opacity="0.72"/><polygon points="1367.33,2312.06 1404.61,2371.49 1273.2,3529.24 1221.98,3388.83" opacity="0.72"/><polygon points="1237.51,3431.39 1256.71,3484.02 799.64,7285.97 774.55,7040.54" opacity="0.72"/><polygon points="1761.49,630.25 1764.68,630.95 1772.65,655.29 1769.23,654.5" opacity="0.72"/><polygon points="1766.39,653.84 1775.51,655.96 1784.82,683.84 1775.01,681.42" opacity="0.72"/><polygon points="1778.06,682.17 1781.74,683.08 1792.22,715.1 1788.24,714.05" opacity="0.72"/><polygon points="1784.93,713.17 1795.56,715.98 1808.06,753.43 1796.48,750.14" opacity="0.72"/><polygon points="1800.09,751.16 1804.43,752.39 1818.82,796.38 1814.05,794.91" opacity="0.72"/><polygon points="1810.1,793.7 1822.82,797.61 1840.49,850.52 1826.38,845.8" opacity="0.72"/><polygon points="1830.77,847.27 1836.06,849.04 1857.06,913.22 1851.12,911.04" opacity="0.72"/><polygon points="1846.2,909.24 1862.04,915.04 1888.9,995.46 1870.86,988.15" opacity="0.72"/><polygon points="1876.46,990.42 1883.22,993.16 1916.71,1095.49 1908.86,1091.92" opacity="0.72"/><polygon points="1902.37,1088.98 1923.31,1098.48 1968.96,1235.18 1944.05,1222.34" opacity="0.72"/><polygon points="1951.76,1226.32 1961.11,1231.13 2022.76,1419.52 2011.25,1412.66" opacity="0.72"/><polygon points="2001.76,1407.01 2032.46,1425.31 2126.81,1707.79 2086.95,1679.63" opacity="0.72"/><polygon points="2099.24,1688.31 2114.18,1698.87 2263.79,2155.99 2242.69,2137.68" opacity="0.72"/><polygon points="2225.41,2122.69 2281.69,2171.52 2582.87,3073.32 2489.8,2968.73" opacity="0.72"/><polygon points="2518.13,3000.56 2553.02,3039.77 3348.48,5470.34 3263.06,5334.16" opacity="0.72"/><polygon points="3195.21,5226 3423.26,5589.54 3811.24,6751.22 3505.76,6219.75" opacity="0.72"/><polygon points="1959.4,673.57 1963.39,674.45 1987.15,705.12 1982.81,704.11" opacity="0.72"/><polygon points="1979.21,703.28 1990.79,705.96 2018.72,741.71 2006.04,738.57" opacity="0.72"/><polygon points="2009.99,739.55 2014.74,740.72 2047.15,782.55 2041.89,781.16" opacity="0.72"/><polygon points="2037.53,780.01 2051.56,783.72 2090.7,833.8 2075.03,829.34" opacity="0.72"/><polygon points="2079.9,830.73 2085.77,832.4 2132.58,892.81 2125.93,890.76" opacity="0.72"/><polygon points="2120.43,889.07 2138.15,894.52 2196.89,969.68 2176.51,962.86" opacity="0.72"/><polygon points="2182.84,964.98 2190.48,967.53 2263.95,1062.35 2254.98,1059.06" opacity="0.72"/><polygon points="2247.56,1056.35 2271.47,1065.11 2369.32,1190.31 2340.5,1178.62" opacity="0.72"/><polygon points="2349.43,1182.24 2360.24,1186.62 2491.94,1356.6 2478.42,1350.46" opacity="0.72"/><polygon points="2467.26,1345.4 2503.33,1361.77 2698.07,1610.95 2650.43,1586.4" opacity="0.72"/><polygon points="2665.13,1593.97 2682.99,1603.18 2985.19,1993.2 2959.5,1977.89" opacity="0.72"/><polygon points="2938.45,1965.34 3006.94,2006.17 3571.88,2729.02 3457.39,2648.11" opacity="0.72"/><polygon points="3492.36,2672.82 3535.28,2703.15 4850.41,4400.48 4750.78,4314.03" opacity="0.72"/><polygon points="4670.89,4244.7 4936.73,4475.38 7368.24,7586.57 6701.58,6916.48" opacity="0.72"/><polygon points="982.66,518.18 1137.35,562.07 1135.92,562.92 981.06,518.79" opacity="0.3"/><polygon points="1137.35,562.07 2258.69,880.28 2262.29,883.89 1135.92,562.92" opacity="0.3"/><polygon points="540.72,448.13 1009.54,637.7 1007.29,639.03 538.79,448.45" opacity="0.26"/><polygon points="1009.54,637.7 2695.47,1319.43 2706.04,1330.06 1007.29,639.03" opacity="0.55"/><polygon points="515.09,567.22 795.5,764.35 791.47,766.74 511.85,568.09" opacity="0.3"/><polygon points="795.5,764.35 5277.15,3915.15 5406.49,4045.19 791.47,766.74" opacity="0.55"/><polygon points="1106.09,488.33 1111.69,489.56 1105.94,492.02 1100.31,490.76" opacity="0.32"/><polygon points="1116.51,483.95 1122.06,485.14 1116.53,487.5 1110.95,486.29" opacity="0.32"/><polygon points="1009.77,528.81 1015.76,530.53 1007.73,533.95 1001.72,532.19" opacity="0.32"/><polygon points="1024.2,522.74 1030.14,524.38 1022.48,527.66 1016.51,525.97" opacity="0.32"/><polygon points="871.42,586.95 877.63,589.5 865.65,594.62 859.44,591.98" opacity="0.32"/><polygon points="892.72,577.99 898.93,580.41 887.61,585.24 881.4,582.75" opacity="0.32"/><polygon points="655.87,677.53 661.66,681.72 641.89,690.16 636.19,685.8" opacity="0.32"/><polygon points="690.45,662.99 696.38,666.89 678,674.74 672.14,670.69" opacity="0.32"/><polygon points="1176.99,503.95 1183.39,505.37 1178.06,508.18 1171.62,506.73" opacity="0.32"/><polygon points="1186.64,498.96 1192.97,500.31 1187.86,503.01 1181.49,501.62" opacity="0.32"/><polygon points="1086.45,550.81 1093.47,552.82 1085.84,556.85 1078.77,554.78" opacity="0.32"/><polygon points="1100.15,543.72 1107.09,545.63 1099.84,549.46 1092.86,547.49" opacity="0.32"/><polygon points="952.36,620.2 959.92,623.31 948.1,629.54 940.51,626.33" opacity="0.32"/><polygon points="973.32,609.35 980.83,612.27 969.73,618.13 962.19,615.11" opacity="0.32"/><polygon points="733.35,733.53 740.82,738.93 720.11,749.86 712.71,744.21" opacity="0.32"/><polygon points="769.35,714.9 776.92,719.88 757.85,729.94 750.33,724.75" opacity="0.32"/><polygon points="1258.42,521.91 1265.82,523.54 1261.11,526.79 1253.65,525.12" opacity="0.7"/><polygon points="1266.97,516.15 1274.25,517.71 1269.76,520.81 1262.42,519.22" opacity="0.7"/><polygon points="1176.93,576.77 1185.28,579.17 1178.34,583.96 1169.92,581.5" opacity="0.7"/><polygon points="1189.42,568.36 1197.64,570.63 1191.07,575.17 1182.78,572.84" opacity="0.7"/><polygon points="1051.78,661.04 1061.17,664.9 1049.92,672.68 1040.46,668.67" opacity="0.7"/><polygon points="1071.71,647.62 1080.98,651.22 1070.48,658.47 1061.15,654.74" opacity="0.7"/><polygon points="835,807.01 845.01,814.23 823.71,828.95 813.73,821.33" opacity="0.7"/><polygon points="871.75,782.26 881.76,788.85 862.4,802.22 852.39,795.3" opacity="0.7"/><polygon points="1352.94,542.74 1361.57,544.65 1357.77,548.45 1349.04,546.49" opacity="0.7"/><polygon points="1359.9,536.03 1368.37,537.85 1364.75,541.47 1356.19,539.61" opacity="0.7"/><polygon points="1285.33,607.88 1295.43,610.77 1289.62,616.58 1279.41,613.59" opacity="0.7"/><polygon points="1295.85,597.75 1305.72,600.48 1300.26,605.94 1290.26,603.13" opacity="0.7"/><polygon points="1176.84,712.42 1188.82,717.35 1178.87,727.3 1166.73,722.16" opacity="0.7"/><polygon points="1194.51,695.39 1206.23,699.95 1197.03,709.15 1185.16,704.4" opacity="0.7"/><polygon points="974.23,907.64 988.31,917.81 967.44,938.67 953.26,927.84" opacity="0.7"/><polygon points="1009.98,873.2 1023.82,882.3 1005.19,900.93 991.22,891.27" opacity="0.7"/><polygon points="1463.96,567.22 1474.18,569.47 1471.69,573.97 1461.34,571.65" opacity="0.7"/><polygon points="1468.63,559.3 1478.62,561.44 1476.25,565.71 1466.15,563.51" opacity="0.7"/><polygon points="1417.55,645.82 1429.99,649.39 1426.02,656.57 1413.39,652.86" opacity="0.7"/><polygon points="1424.89,633.38 1436.99,636.72 1433.28,643.44 1421,639.97" opacity="0.7"/><polygon points="1338.91,779 1354.73,785.51 1347.43,798.71 1331.3,791.88" opacity="0.7"/><polygon points="1352.09,756.68 1367.38,762.63 1360.71,774.69 1345.13,768.46" opacity="0.7"/><polygon points="1176.59,1053.9 1197.84,1069.26 1180.24,1101.11 1158.51,1084.52" opacity="0.7"/><polygon points="1206.82,1002.69 1227.23,1016.12 1211.91,1043.83 1191.05,1029.41" opacity="0.7"/><polygon points="1596.23,596.37 1608.51,599.08 1607.93,604.5 1595.47,601.71" opacity="0.7"/><polygon points="1597.59,586.9 1609.52,589.45 1608.98,594.57 1596.87,591.93" opacity="0.7"/><polygon points="1582.39,693.12 1598.11,697.63 1597.15,706.73 1581.12,702.03" opacity="0.7"/><polygon points="1584.63,677.49 1599.8,681.67 1598.91,690.12 1583.45,685.76" opacity="0.7"/><polygon points="1557.28,868.72 1579.12,877.69 1577.19,896.04 1554.73,886.53" opacity="0.7"/><polygon points="1561.64,838.2 1582.44,846.29 1580.7,862.79 1559.35,854.24" opacity="0.7"/><polygon points="1497.6,1285.92 1533.35,1311.77 1527.6,1366.27 1490.19,1337.71" opacity="0.7"/><polygon points="1509.62,1201.89 1542.65,1223.62 1537.84,1269.15 1503.4,1245.35" opacity="0.7"/><polygon points="1756.5,631.7 1771.52,635.02 1773.79,641.67 1758.49,638.24" opacity="0.7"/><polygon points="1752.98,620.15 1767.5,623.26 1769.63,629.5 1754.85,626.28" opacity="0.7"/><polygon points="1793.65,753.73 1814.13,759.61 1818.21,771.53 1797.19,765.37" opacity="0.7"/><polygon points="1787.49,733.5 1807.05,738.9 1810.79,749.83 1790.74,744.18" opacity="0.7"/><polygon points="1867.45,996.14 1899.55,1009.33 1908.86,1036.54 1875.44,1022.39" opacity="0.7"/><polygon points="1853.99,951.92 1883.89,963.55 1892.08,987.48 1861.03,975.05" opacity="0.7"/><polygon points="2084.92,1710.43 2157.23,1762.7 2196.21,1876.67 2117.15,1816.31" opacity="0.7"/><polygon points="2035.39,1547.78 2097.75,1588.8 2127.95,1677.1 2060.59,1630.53" opacity="0.7"/><polygon points="1954.69,675.4 1973.5,679.54 1980.1,687.9 1960.85,683.58" opacity="0.7"/><polygon points="1943.87,661 1961.91,664.86 1968.05,672.64 1949.6,668.62" opacity="0.7"/><polygon points="2074.12,834.21 2101.93,842.19 2114.77,858.46 2086.02,850.03" opacity="0.7"/><polygon points="2053.65,806.99 2079.84,814.22 2091.46,828.94 2064.43,821.32" opacity="0.7"/><polygon points="2342.73,1191.4 2394.43,1212.64 2429.56,1257.13 2374.67,1233.87" opacity="0.7"/><polygon points="2290.26,1121.63 2336.89,1139.77 2366.73,1177.56 2317.49,1157.84" opacity="0.7"/><polygon points="3504.8,2736.72 3721.51,2893.35 4015.03,3265.08 3749.99,3062.76" opacity="0.7"/><polygon points="3174,2296.82 3333.17,2401.53 3522.22,2640.95 3335.96,2512.19" opacity="0.7"/></g><g stroke="#8f8887" stroke-width="1" opacity=".3" clip-path="url(#floorclip)"><line x1="1020.36" y1="468" x2="-22649.97" y2="8276.1" /><line x1="1079.1" y1="480.86" x2="-16710.37" y2="7364.26" /><line x1="1145.69" y1="495.44" x2="-11983.77" y2="6638.65" /><line x1="1221.81" y1="512.1" x2="-10491.66" y2="7443.13" /><line x1="1309.65" y1="531.33" x2="-6358.83" y2="6702.06" /><line x1="1412.17" y1="553.77" x2="-4131.6" y2="7523.78" /><line x1="1533.36" y1="580.3" x2="-619.35" y2="6766.77" /><line x1="1678.83" y1="612.15" x2="2374.69" y2="7606.29" /><line x1="1856.72" y1="651.09" x2="5238.19" y2="6832.81" /><line x1="2079.19" y1="699.8" x2="9032.31" y2="7690.72" /><line x1="1103.34" y1="515.25" x2="2154.21" y2="775.23" /><line x1="992.62" y1="567.06" x2="2422.69" y2="1045.17" /><line x1="824.88" y1="645.54" x2="3287.61" y2="1914.79" /></g><text transform="matrix(-0.58 -0.13 -1.2 0.5 1094.54 493.27)" font-size="10" fill="#7c7675" opacity=".5" style="font-family:'Liberation Mono',monospace;font-weight:bold">1METER</text><text transform="matrix(-0.67 -0.15 -1.12 0.58 1166.28 509.61)" font-size="10" fill="#7c7675" opacity=".5" style="font-family:'Liberation Mono',monospace;font-weight:bold">1METER</text><text transform="matrix(-0.77 -0.18 -0.99 0.67 1248.95 528.45)" font-size="10" fill="#7c7675" opacity=".5" style="font-family:'Liberation Mono',monospace;font-weight:bold">1METER</text><text transform="matrix(-0.9 -0.21 -0.81 0.78 1345.26 550.39)" font-size="10" fill="#7c7675" opacity=".5" style="font-family:'Liberation Mono',monospace;font-weight:bold">1METER</text><text transform="matrix(-1.07 -0.24 -0.55 0.93 1458.89 576.28)" font-size="10" fill="#7c7675" opacity=".5" style="font-family:'Liberation Mono',monospace;font-weight:bold">1METER</text><text transform="matrix(-1.29 -0.29 -0.16 1.12 1594.98 607.29)" font-size="10" fill="#7c7675" opacity=".5" style="font-family:'Liberation Mono',monospace;font-weight:bold">1METER</text><text transform="matrix(-1.58 -0.36 0.42 1.37 1760.92 645.09)" font-size="10" fill="#7c7675" opacity=".5" style="font-family:'Liberation Mono',monospace;font-weight:bold">1METER</text><path d="M1047 678 1150 682 1206 685 1242 694.6 1273 708.6 1287 717 1337 737 1284 818 1242 816 1192 792.5 1150 790 1005 781 965 770 940 752 930 735 990 720Z" fill="#5876a1" style="mix-blend-mode:multiply"/><path d="M730 857 826.4 862.5 904.8 928 740 928Z" fill="#5876a1" style="mix-blend-mode:multiply"/><path d="M460 374 534 373 560 378 520 386 460 394Z" fill="#5c6c84"/><path d="M460 239.3 533 240.8 608 377 531 374 460 375.6Z" fill="#47505e"/><path d="M460 292 560 290M460 335 584 333" stroke="#3a424e" stroke-width="1.5" fill="none"/><path d="M533 240.8 608 377" stroke="#394150" stroke-width="5" fill="none" opacity=".7"/><path d="M534 241 1833 176 1833 660 1882.12,658.27 1766.05,632.48 1182.44,502.82 741.16,404.79 608 377Z" fill="url(#wall)"/><path d="M534 241 1833 176 1833 660 1882.12,658.27 1766.05,632.48 1182.44,502.82 741.16,404.79 608 377Z" fill="url(#walld)"/><g fill="#5e5a5a" clip-path="url(#wallclip)"><polygon points="535.96,244.47 536.31,244.45 572.04,367.22 571.68,367.14" opacity="0.55"/><polygon points="549.83,243.74 550.2,243.72 586.18,370.36 585.8,370.27" opacity="0.55"/><polygon points="564.65,242.96 565.05,242.94 601.22,373.7 600.82,373.61" opacity="0.55"/><polygon points="580.52,242.13 580.95,242.11 617.27,377.27 616.84,377.17" opacity="0.55"/><polygon points="597.56,241.24 598.02,241.21 634.42,381.08 633.96,380.97" opacity="0.55"/><polygon points="615.91,240.27 616.4,240.25 652.79,385.16 652.29,385.05" opacity="0.55"/><polygon points="635.71,239.24 636.25,239.21 672.51,389.54 671.98,389.42" opacity="0.55"/><polygon points="657.16,238.11 657.74,238.08 693.74,394.26 693.17,394.13" opacity="0.55"/><polygon points="680.46,236.89 681.09,236.86 716.67,399.35 716.05,399.21" opacity="0.55"/><polygon points="705.87,235.56 706.56,235.52 741.5,404.87 740.83,404.72" opacity="0.55"/><polygon points="733.68,234.1 734.44,234.06 768.48,410.86 767.75,410.7" opacity="0.55"/><polygon points="764.26,232.49 765.09,232.45 797.9,417.39 797.1,417.22" opacity="0.55"/><polygon points="798.03,230.72 798.95,230.67 830.1,424.55 829.23,424.35" opacity="0.82"/><polygon points="835.53,228.75 836.56,228.7 865.51,432.42 864.55,432.2" opacity="0.82"/><polygon points="877.4,226.56 878.56,226.5 904.63,441.11 903.56,440.87" opacity="0.82"/><polygon points="924.47,224.09 925.77,224.02 948.07,450.76 946.88,450.49" opacity="0.82"/><polygon points="977.76,221.29 979.24,221.21 996.59,461.54 995.25,461.24" opacity="0.82"/><polygon points="1038.59,218.1 1040.29,218.01 1051.13,473.65 1049.63,473.32" opacity="0.82"/><polygon points="1108.69,214.42 1110.66,214.32 1112.9,487.37 1111.19,487" opacity="0.82"/><polygon points="1190.35,210.14 1192.65,210.02 1183.42,503.04 1181.46,502.61" opacity="0.82"/><polygon points="1286.68,205.09 1289.41,204.94 1264.7,521.1 1262.43,520.6" opacity="0.82"/><polygon points="1402.02,199.03 1405.33,198.86 1359.42,542.14 1356.76,541.55" opacity="0.82"/><polygon points="1542.63,191.66 1546.7,191.44 1471.19,566.97 1468.03,566.27" opacity="0.82"/><polygon points="1717.84,182.47 1722.97,182.2 1605.09,596.72 1601.27,595.87" opacity="0.82"/><polygon points="1942.18,170.7 1948.85,170.35 1768.4,633 1763.7,631.96" opacity="0.82"/><polygon points="2239.71,155.09 2248.75,154.61 1972.01,678.24 1966.08,676.92" opacity="0.82"/><polygon points="535.26,285.92 2135.75,360.9 2133.18,365.79 535.57,286.98" opacity=".8"/><polygon points="547.07,325.61 2045.42,532.49 2043.28,536.55 547.37,326.62" opacity=".8"/><polygon points="523.12,245.14 2244.22,154.85 2241.79,159.46 523.37,245.99" opacity=".4"/><polygon points="616.66,375.75 1971.46,672.97 1968.35,678.89 617.17,377.64" opacity=".6"/><polygon points="845.53,303.45 847.85,303.57 848.45,307.76 846.13,307.63" opacity="0.7"/><polygon points="847.26,299.35 849.6,299.46 850.19,303.68 847.85,303.57" opacity="0.7"/><polygon points="844.33,295.03 846.66,295.12 847.26,299.35 844.93,299.25" opacity="0.7"/><polygon points="842.62,299.14 844.93,299.25 845.53,303.45 843.22,303.33" opacity="0.7"/><polygon points="865,300.15 867.04,300.25 867.61,304.57 865.57,304.47" opacity="0.65"/><polygon points="855.17,370.9 857.45,371.22 858,375.13 855.73,374.8" opacity="0.7"/><polygon points="856.89,367.29 859.18,367.61 859.74,371.55 857.45,371.22" opacity="0.7"/><polygon points="854.05,363.05 856.33,363.35 856.89,367.29 854.61,366.98" opacity="0.7"/><polygon points="852.35,366.67 854.61,366.98 855.17,370.9 852.91,370.58" opacity="0.7"/><polygon points="874.23,369.66 876.23,369.94 876.76,373.96 874.77,373.68" opacity="0.65"/><polygon points="839.88,263.91 842.23,263.9 842.75,267.54 840.4,267.54" opacity="0.65"/><polygon points="849.9,334.04 852.21,334.26 852.69,337.65 850.39,337.42" opacity="0.65"/><polygon points="859.26,399.45 861.51,399.86 861.96,403.02 859.71,402.61" opacity="0.65"/><polygon points="886.31,305.52 888.91,305.66 889.44,310.08 886.85,309.94" opacity="0.7"/><polygon points="888.37,301.21 890.98,301.33 891.52,305.79 888.91,305.66" opacity="0.7"/><polygon points="885.23,296.64 887.83,296.75 888.37,301.21 885.77,301.09" opacity="0.7"/><polygon points="883.19,300.98 885.77,301.09 886.31,305.52 883.74,305.39" opacity="0.7"/><polygon points="908.19,302.11 910.48,302.21 910.99,306.78 908.7,306.67" opacity="0.65"/><polygon points="895.01,376.55 897.54,376.91 898.03,381.02 895.51,380.65" opacity="0.7"/><polygon points="897.04,372.78 899.58,373.13 900.08,377.27 897.54,376.91" opacity="0.7"/><polygon points="894,368.3 896.53,368.63 897.04,372.78 894.51,372.43" opacity="0.7"/><polygon points="891.99,372.09 894.51,372.43 895.01,376.55 892.5,376.19" opacity="0.7"/><polygon points="916.34,375.41 918.57,375.72 919.03,379.95 916.81,379.64" opacity="0.65"/><polygon points="881.2,263.77 883.83,263.76 884.3,267.61 881.67,267.6" opacity="0.65"/><polygon points="890.26,337.78 892.83,338.01 893.26,341.58 890.7,341.33" opacity="0.65"/><polygon points="898.68,406.53 901.18,406.98 901.58,410.3 899.09,409.84" opacity="0.65"/><polygon points="931.94,307.85 934.85,308 935.31,312.68 932.41,312.52" opacity="0.7"/><polygon points="934.39,303.29 937.33,303.43 937.79,308.15 934.85,308" opacity="0.7"/><polygon points="931.01,298.45 933.93,298.56 934.39,303.29 931.48,303.16" opacity="0.7"/><polygon points="928.58,303.03 931.48,303.16 931.94,307.85 929.05,307.7" opacity="0.7"/><polygon points="956.69,304.3 959.27,304.42 959.69,309.26 957.11,309.13" opacity="0.65"/><polygon points="939.4,382.84 942.22,383.24 942.65,387.58 939.83,387.16" opacity="0.7"/><polygon points="941.8,378.89 944.65,379.28 945.07,383.65 942.22,383.24" opacity="0.7"/><polygon points="938.53,374.15 941.37,374.52 941.8,378.89 938.97,378.5" opacity="0.7"/><polygon points="936.15,378.12 938.97,378.5 939.4,382.84 936.59,382.44" opacity="0.7"/><polygon points="963.41,381.84 965.91,382.19 966.29,386.66 963.8,386.3" opacity="0.65"/><polygon points="927.55,263.61 930.51,263.6 930.91,267.68 927.95,267.67" opacity="0.65"/><polygon points="935.33,341.94 938.2,342.21 938.57,345.98 935.71,345.7" opacity="0.65"/><polygon points="942.53,414.41 945.32,414.91 945.66,418.4 942.88,417.89" opacity="0.65"/><polygon points="983.34,310.47 986.63,310.64 986.98,315.61 983.7,315.42" opacity="0.7"/><polygon points="986.27,305.64 989.59,305.79 989.94,310.8 986.63,310.64" opacity="0.7"/><polygon points="982.6,300.48 985.91,300.61 986.27,305.64 982.97,305.49" opacity="0.7"/><polygon points="979.7,305.34 982.97,305.49 983.34,310.47 980.07,310.3" opacity="0.7"/><polygon points="1011.53,306.78 1014.47,306.91 1014.76,312.07 1011.84,311.92" opacity="0.65"/><polygon points="989.16,389.9 992.34,390.35 992.67,394.93 989.5,394.46" opacity="0.7"/><polygon points="992.01,385.75 995.22,386.19 995.55,390.8 992.34,390.35" opacity="0.7"/><polygon points="988.49,380.71 991.68,381.13 992.01,385.75 988.83,385.32" opacity="0.7"/><polygon points="985.67,384.88 988.83,385.32 989.16,389.9 986.01,389.45" opacity="0.7"/><polygon points="1016.38,389.08 1019.21,389.47 1019.48,394.2 1016.66,393.8" opacity="0.65"/><polygon points="979.88,263.43 983.24,263.42 983.55,267.76 980.2,267.76" opacity="0.65"/><polygon points="985.99,346.63 989.23,346.93 989.52,350.92 986.28,350.61" opacity="0.65"/><polygon points="991.61,423.22 994.74,423.78 995,427.46 991.88,426.89" opacity="0.65"/><polygon points="1041.66,313.44 1045.41,313.63 1045.63,318.93 1041.89,318.72" opacity="0.7"/><polygon points="1045.19,308.3 1048.98,308.47 1049.19,313.82 1045.41,313.63" opacity="0.7"/><polygon points="1041.19,302.8 1044.96,302.94 1045.19,308.3 1041.43,308.13" opacity="0.7"/><polygon points="1037.7,307.96 1041.43,308.13 1041.66,313.44 1037.94,313.25" opacity="0.7"/><polygon points="1074.05,309.61 1077.41,309.76 1077.55,315.27 1074.2,315.1" opacity="0.65"/><polygon points="1045.35,397.87 1048.96,398.38 1049.16,403.23 1045.57,402.7" opacity="0.7"/><polygon points="1048.75,393.5 1052.39,394 1052.59,398.89 1048.96,398.38" opacity="0.7"/><polygon points="1044.93,388.12 1048.55,388.6 1048.75,393.5 1045.14,393.01" opacity="0.7"/><polygon points="1041.56,392.52 1045.14,393.01 1045.35,397.87 1041.78,397.36" opacity="0.7"/><polygon points="1076.44,397.28 1079.65,397.72 1079.78,402.75 1076.58,402.3" opacity="0.65"/><polygon points="1039.46,263.22 1043.3,263.21 1043.49,267.86 1039.66,267.85" opacity="0.65"/><polygon points="1043.34,351.93 1047.03,352.27 1047.2,356.52 1043.53,356.16" opacity="0.65"/><polygon points="1046.9,433.15 1050.44,433.78 1050.6,437.68 1047.07,437.03" opacity="0.65"/><polygon points="1108.41,316.84 1112.72,317.06 1112.77,322.73 1108.47,322.49" opacity="0.7"/><polygon points="1112.68,311.35 1117.05,311.55 1117.08,317.28 1112.72,317.06" opacity="0.7"/><polygon points="1108.3,305.44 1112.64,305.61 1112.68,311.35 1108.36,311.16" opacity="0.7"/><polygon points="1104.07,310.96 1108.36,311.16 1108.41,316.84 1104.14,316.62" opacity="0.7"/><polygon points="1145.98,312.86 1149.87,313.04 1149.8,318.95 1145.93,318.75" opacity="0.65"/><polygon points="1109.29,406.94 1113.41,407.52 1113.45,412.68 1109.34,412.08" opacity="0.7"/><polygon points="1113.37,402.33 1117.53,402.9 1117.56,408.11 1113.41,407.52" opacity="0.7"/><polygon points="1109.19,396.56 1113.33,397.11 1113.37,402.33 1109.24,401.76" opacity="0.7"/><polygon points="1105.15,401.2 1109.24,401.76 1109.29,406.94 1105.21,406.36" opacity="0.7"/><polygon points="1145.1,406.66 1148.8,407.17 1148.73,412.53 1145.05,412.01" opacity="0.65"/><polygon points="1107.89,262.99 1112.32,262.97 1112.35,267.97 1107.93,267.96" opacity="0.65"/><polygon points="1108.81,357.98 1113.04,358.37 1113.07,362.91 1108.86,362.5" opacity="0.65"/><polygon points="1109.66,444.42 1113.69,445.14 1113.73,449.27 1109.7,448.53" opacity="0.65"/><polygon points="1185.57,320.77 1190.58,321.03 1190.38,327.13 1185.39,326.85" opacity="0.7"/><polygon points="1190.78,314.89 1195.86,315.11 1195.64,321.29 1190.58,321.03" opacity="0.7"/><polygon points="1185.93,308.5 1190.98,308.7 1190.78,314.89 1185.75,314.66" opacity="0.7"/><polygon points="1180.77,314.43 1185.75,314.66 1185.57,320.77 1180.6,320.52" opacity="0.7"/><polygon points="1229.62,316.64 1234.16,316.85 1233.81,323.23 1229.29,323" opacity="0.65"/><polygon points="1182.7,417.35 1187.45,418.02 1187.28,423.53 1182.54,422.84" opacity="0.7"/><polygon points="1187.63,412.47 1192.44,413.13 1192.25,418.7 1187.45,418.02" opacity="0.7"/><polygon points="1183.03,406.26 1187.81,406.89 1187.63,412.47 1182.87,411.82" opacity="0.7"/><polygon points="1178.14,411.18 1182.87,411.82 1182.7,417.35 1177.99,416.68" opacity="0.7"/><polygon points="1224.37,417.49 1228.65,418.07 1228.34,423.82 1224.07,423.21" opacity="0.65"/><polygon points="1187.29,262.72 1192.46,262.7 1192.29,268.09 1187.13,268.09" opacity="0.65"/><polygon points="1184.26,364.96 1189.15,365.41 1188.99,370.27 1184.11,369.8" opacity="0.65"/><polygon points="1181.52,457.32 1186.16,458.15 1186.02,462.55 1181.39,461.7" opacity="0.65"/><polygon points="1275.76,325.37 1281.66,325.67 1281.14,332.27 1275.26,331.94" opacity="0.7"/><polygon points="1282.19,319.02 1288.17,319.29 1287.62,325.97 1281.66,325.67" opacity="0.7"/><polygon points="1276.77,312.09 1282.72,312.32 1282.19,319.02 1276.27,318.75" opacity="0.7"/><polygon points="1270.4,318.49 1276.27,318.75 1275.76,325.37 1269.92,325.07" opacity="0.7"/><polygon points="1328.07,321.09 1333.45,321.34 1332.72,328.27 1327.36,328" opacity="0.65"/><polygon points="1267.86,429.42 1273.4,430.21 1272.93,436.12 1267.41,435.31" opacity="0.7"/><polygon points="1273.87,424.25 1279.49,425.02 1279,431 1273.4,430.21" opacity="0.7"/><polygon points="1268.76,417.52 1274.35,418.26 1273.87,424.25 1268.31,423.49" opacity="0.7"/><polygon points="1262.8,422.74 1268.31,423.49 1267.86,429.42 1262.36,428.64" opacity="0.7"/><polygon points="1316.89,430.13 1321.92,430.82 1321.27,437 1316.25,436.28" opacity="0.65"/><polygon points="1280.55,262.4 1286.66,262.37 1286.2,268.24 1280.1,268.23" opacity="0.65"/><polygon points="1272.14,373.08 1277.87,373.61 1277.46,378.85 1271.74,378.3" opacity="0.65"/><polygon points="1264.6,472.24 1270,473.21 1269.63,477.91 1264.25,476.93" opacity="0.65"/><polygon points="1382.61,330.81 1389.65,331.17 1388.68,338.37 1381.67,337.97" opacity="0.7"/><polygon points="1390.63,323.92 1397.78,324.24 1396.77,331.53 1389.65,331.17" opacity="0.7"/><polygon points="1384.51,316.34 1391.61,316.62 1390.63,323.92 1383.55,323.6" opacity="0.7"/><polygon points="1376.56,323.29 1383.55,323.6 1382.61,330.81 1375.64,330.46" opacity="0.7"/><polygon points="1445.66,326.41 1452.14,326.7 1450.88,334.29 1444.43,333.96" opacity="0.65"/><polygon points="1367.82,443.6 1374.37,444.53 1373.51,450.91 1366.99,449.95" opacity="0.7"/><polygon points="1375.24,438.1 1381.89,439.01 1381,445.46 1374.37,444.53" opacity="0.7"/><polygon points="1369.5,430.76 1376.11,431.63 1375.24,438.1 1368.66,437.2" opacity="0.7"/><polygon points="1362.15,436.31 1368.66,437.2 1367.82,443.6 1361.33,442.68" opacity="0.7"/><polygon points="1426.3,445.07 1432.29,445.89 1431.18,452.58 1425.21,451.73" opacity="0.65"/><polygon points="1391.63,262.01 1398.97,261.99 1398.1,268.42 1390.79,268.41" opacity="0.65"/><polygon points="1375.81,382.67 1382.62,383.3 1381.86,388.98 1375.07,388.32" opacity="0.65"/><polygon points="1361.78,489.69 1368.13,490.83 1367.45,495.88 1361.12,494.72" opacity="0.65"/><polygon points="1511.18,337.36 1519.73,337.8 1518.13,345.7 1509.63,345.22" opacity="0.7"/><polygon points="1521.34,329.83 1530.05,330.23 1528.39,338.24 1519.73,337.8" opacity="0.7"/><polygon points="1514.33,321.46 1522.97,321.8 1521.34,329.83 1512.75,329.44" opacity="0.7"/><polygon points="1504.26,329.06 1512.75,329.44 1511.18,337.36 1502.73,336.93" opacity="0.7"/><polygon points="1588.56,332.87 1596.52,333.23 1594.5,341.61 1586.59,341.21" opacity="0.65"/><polygon points="1486.82,460.47 1494.69,461.59 1493.28,468.51 1485.46,467.36" opacity="0.7"/><polygon points="1496.1,454.61 1504.09,455.7 1502.64,462.72 1494.69,461.59" opacity="0.7"/><polygon points="1489.58,446.53 1497.52,447.57 1496.1,454.61 1488.19,453.53" opacity="0.7"/><polygon points="1480.38,452.46 1488.19,453.53 1486.82,460.47 1479.05,459.37" opacity="0.7"/><polygon points="1557.69,463.02 1564.95,464.01 1563.19,471.3 1555.96,470.28" opacity="0.65"/><polygon points="1526.18,261.55 1535.17,261.52 1533.73,268.64 1524.78,268.62" opacity="0.65"/><polygon points="1499.94,394.15 1508.18,394.91 1506.92,401.12 1498.72,400.32" opacity="0.65"/><polygon points="1476.95,510.37 1484.54,511.73 1483.43,517.19 1475.87,515.8" opacity="0.65"/><polygon points="1668.86,345.4 1679.47,345.94 1676.96,354.7 1666.42,354.1" opacity="0.7"/><polygon points="1682,337.1 1692.81,337.59 1690.22,346.49 1679.47,345.94" opacity="0.7"/><polygon points="1673.81,327.75 1684.55,328.17 1682,337.1 1671.33,336.61" opacity="0.7"/><polygon points="1660.8,336.14 1671.33,336.61 1668.86,345.4 1658.4,344.86" opacity="0.7"/><polygon points="1765.95,340.89 1775.95,341.34 1772.81,350.69 1762.88,350.19" opacity="0.65"/><polygon points="1630.87,480.9 1640.49,482.26 1638.32,489.83 1628.76,488.43" opacity="0.7"/><polygon points="1642.67,474.63 1652.46,475.97 1650.22,483.64 1640.49,482.26" opacity="0.7"/><polygon points="1635.15,465.65 1644.87,466.93 1642.67,474.63 1633,473.31" opacity="0.7"/><polygon points="1623.45,472 1633,473.31 1630.87,480.9 1621.38,479.55" opacity="0.7"/><polygon points="1718.42,484.98 1727.4,486.2 1724.72,494.21 1715.79,492.94" opacity="0.65"/><polygon points="1692.53,260.98 1703.77,260.94 1701.5,268.9 1690.32,268.89" opacity="0.65"/><polygon points="1651.27,408.14 1661.41,409.08 1659.46,415.91 1649.37,414.94" opacity="0.65"/><polygon points="1615.63,535.27 1624.85,536.92 1623.16,542.86 1613.97,541.17" opacity="0.65"/><polygon points="1866.8,355.48 1880.3,356.17 1876.44,366 1863.04,365.24" opacity="0.7"/><polygon points="1884.19,346.24 1898,346.86 1894,356.87 1880.3,356.17" opacity="0.7"/><polygon points="1874.43,335.66 1888.13,336.2 1884.19,346.24 1870.6,345.62" opacity="0.7"/><polygon points="1857.21,345.02 1870.6,345.62 1866.8,355.48 1853.51,354.81" opacity="0.7"/><polygon points="1992,351.11 2004.95,351.7 2000.12,362.28 1987.28,361.62" opacity="0.65"/><polygon points="1808.81,506.13 1820.83,507.84 1817.56,516.18 1805.62,514.42" opacity="0.7"/><polygon points="1824.13,499.42 1836.4,501.09 1833.02,509.57 1820.83,507.84" opacity="0.7"/><polygon points="1815.29,489.31 1827.47,490.91 1824.13,499.42 1812.03,497.76" opacity="0.7"/><polygon points="1800.11,496.13 1812.03,497.76 1808.81,506.13 1796.96,504.45" opacity="0.7"/><polygon points="1919.55,512.45 1930.94,514.01 1926.9,522.88 1915.59,521.27" opacity="0.65"/><polygon points="1903.46,260.26 1917.92,260.21 1914.38,269.24 1900,269.22" opacity="0.65"/><polygon points="1839.82,425.57 1852.62,426.76 1849.64,434.36 1836.91,433.13" opacity="0.65"/><polygon points="1785.83,565.83 1797.29,567.89 1794.74,574.38 1783.35,572.29" opacity="0.65"/><polygon points="2122.66,368.52 2140.42,369.42 2134.47,380.62 2116.87,379.62" opacity="0.7"/><polygon points="2146.43,358.1 2164.67,358.92 2158.49,370.34 2140.42,369.42" opacity="0.7"/><polygon points="2134.45,345.92 2152.52,346.63 2146.43,358.1 2128.52,357.29" opacity="0.7"/><polygon points="2110.93,356.49 2128.52,357.29 2122.66,368.52 2105.22,367.63" opacity="0.7"/><polygon points="2289.95,364.58 2307.35,365.37 2299.83,377.55 2282.6,376.67" opacity="0.65"/><polygon points="2034.2,538.09 2049.65,540.29 2044.72,549.57 2029.39,547.32" opacity="0.7"/><polygon points="2054.63,530.9 2070.46,533.06 2065.35,542.51 2049.65,540.29" opacity="0.7"/><polygon points="2043.97,519.35 2059.67,521.42 2054.63,530.9 2039.06,528.77" opacity="0.7"/><polygon points="2023.74,526.68 2039.06,528.77 2034.2,538.09 2018.99,535.94" opacity="0.7"/><polygon points="2178.51,547.82 2193.43,549.86 2187.29,559.8 2172.5,557.71" opacity="0.65"/><polygon points="2179.64,259.31 2198.95,259.24 2193.4,269.69 2174.24,269.66" opacity="0.65"/><polygon points="2081.25,447.9 2097.91,449.44 2093.36,458.01 2076.81,456.4" opacity="0.65"/><polygon points="1999.7,604.23 2014.29,606.85 2010.48,614.01 1995.98,611.35" opacity="0.65"/></g><g stroke="#6f6b6b" stroke-width="1" opacity=".4" clip-path="url(#wallclip)"><line x1="781.15" y1="231.61" x2="813.21" y2="420.8" /><line x1="816.76" y1="229.74" x2="846.92" y2="428.29" /><line x1="856.42" y1="227.66" x2="884.07" y2="436.54" /><line x1="900.84" y1="225.33" x2="925.2" y2="445.68" /><line x1="950.96" y1="222.7" x2="971.01" y2="455.85" /><line x1="1007.93" y1="219.71" x2="1022.33" y2="467.25" /><line x1="1073.27" y1="216.28" x2="1080.22" y2="480.12" /><line x1="1148.96" y1="212.31" x2="1146.03" y2="494.74" /><line x1="1237.69" y1="207.65" x2="1221.51" y2="511.51" /><line x1="1343.13" y1="202.12" x2="1308.96" y2="530.93" /><line x1="1470.5" y1="195.44" x2="1411.45" y2="553.7" /><line x1="1627.43" y1="187.21" x2="1533.25" y2="580.76" /><line x1="1825.57" y1="176.81" x2="1680.38" y2="613.45" /><line x1="2083.58" y1="163.28" x2="1861.65" y2="653.72" /><line x1="2433.46" y1="144.92" x2="2090.52" y2="704.56" /><line x1="529.33" y1="266.01" x2="2186.51" y2="264.49" /><line x1="541.38" y1="306.48" x2="2087.29" y2="452.94" /><line x1="552.95" y1="345.36" x2="2005.08" y2="609.11" /></g><text x="1194.81" y="312.86" transform="rotate(2.53 1190.81 313.86)" font-size="7.5" fill="#5e5a5a" opacity=".6" style="font-family:'Liberation Mono',monospace;font-style:italic">1METER</text><text x="1191.66" y="410.54" transform="rotate(7.73 1187.66 411.54)" font-size="7.5" fill="#5e5a5a" opacity=".6" style="font-family:'Liberation Mono',monospace;font-style:italic">1METER</text><text x="1286.27" y="316.91" transform="rotate(2.53 1282.27 317.91)" font-size="7.5" fill="#5e5a5a" opacity=".6" style="font-family:'Liberation Mono',monospace;font-style:italic">1METER</text><text x="1277.95" y="422.26" transform="rotate(7.73 1273.95 423.26)" font-size="7.5" fill="#5e5a5a" opacity=".6" style="font-family:'Liberation Mono',monospace;font-style:italic">1METER</text><text x="1394.79" y="321.71" transform="rotate(2.53 1390.79 322.71)" font-size="7.5" fill="#5e5a5a" opacity=".6" style="font-family:'Liberation Mono',monospace;font-style:italic">1METER</text><text x="1379.38" y="436.02" transform="rotate(7.73 1375.38 437.02)" font-size="7.5" fill="#5e5a5a" opacity=".6" style="font-family:'Liberation Mono',monospace;font-style:italic">1METER</text><text x="1525.61" y="327.5" transform="rotate(2.53 1521.61 328.5)" font-size="7.5" fill="#5e5a5a" opacity=".6" style="font-family:'Liberation Mono',monospace;font-style:italic">1METER</text><text x="1500.33" y="452.44" transform="rotate(7.73 1496.33 453.44)" font-size="7.5" fill="#5e5a5a" opacity=".6" style="font-family:'Liberation Mono',monospace;font-style:italic">1METER</text><text x="1686.42" y="334.61" transform="rotate(2.53 1682.42 335.61)" font-size="7.5" fill="#5e5a5a" opacity=".6" style="font-family:'Liberation Mono',monospace;font-style:italic">1METER</text><text x="1647.03" y="472.35" transform="rotate(7.73 1643.03 473.35)" font-size="7.5" fill="#5e5a5a" opacity=".6" style="font-family:'Liberation Mono',monospace;font-style:italic">1METER</text><text x="1888.84" y="343.57" transform="rotate(2.53 1884.84 344.57)" font-size="7.5" fill="#5e5a5a" opacity=".6" style="font-family:'Liberation Mono',monospace;font-style:italic">1METER</text><text x="1828.69" y="497" transform="rotate(7.73 1824.69 498)" font-size="7.5" fill="#5e5a5a" opacity=".6" style="font-family:'Liberation Mono',monospace;font-style:italic">1METER</text><path d="M460 712.8 581.7 666.7 700.6 761.8 460 887.7Z" fill="#9a9291"/><path d="M700.6 761.8 460 887.7V928H752Z" fill="url(#cubef)"/><g stroke="#ffc4cc" stroke-width="1.3" fill="none"><path d="M460 348.2 534 372.7"/><path d="M603 366 619.4 363.8 1111.7 148"/><path d="M619.4 363.8 629.7 403 616 405"/><path d="M629.7 403 834.8 462.7"/><path d="M531 433.5 460 518.6"/></g><path d="M1047 524.5 1832.5 757.6" stroke="#ffc4cc" stroke-width="1.2" opacity=".8"/><path d="M838.7 500 834.9 470.6 A104.5 104.5 0 0 1 1035.8 440.4 L1086.8 448 1087.7 495 1047.2 517 1049 556.6 1052.8 613.2 1053.8 650.9 Q1053 668 1047.2 681.1 Q1041 696 1032 707.5 Q1021 720 1007.5 728.3 Q994 736 979.2 739.6 Q965 742 950.9 739.6 Q935 737 920.8 730.2 Q908 724 898.1 715.1 Q887 705 879.2 692.5 Q873 681 869.8 666 L862.3 617 849 556.6Z" fill="url(#caps)" stroke="#4f74a8" stroke-width="3.4" stroke-linejoin="round"/><defs><radialGradient id="domehl" gradientUnits="userSpaceOnUse" cx="882" cy="432" r="105"><stop offset="0" stop-color="#a8a4a3" stop-opacity=".55"/><stop offset=".6" stop-color="#9a9696" stop-opacity=".28"/><stop offset="1" stop-color="#8a8686" stop-opacity="0"/></radialGradient><linearGradient id="domedk" gradientUnits="userSpaceOnUse" x1="950" y1="470" x2="1030" y2="415"><stop offset="0" stop-color="#2a313f" stop-opacity="0"/><stop offset=".55" stop-color="#2a313f" stop-opacity=".6"/><stop offset="1" stop-color="#2a313f" stop-opacity=".85"/></linearGradient><clipPath id="domeclip"><path d="M834.9 470.6 A104.5 104.5 0 0 1 1035.8 440.4 L1047 520 838 520Z"/></clipPath></defs><g clip-path="url(#domeclip)"><rect x="770" y="320" width="230" height="230" fill="url(#domehl)"/><rect x="930" y="370" width="120" height="150" fill="url(#domedk)"/></g><path d="M870 668 Q960 712 1053.8 652 Q1053 700 1007.5 728.3 Q965 748 920.8 730.2 Q880 706 870 668Z" fill="#2e3441" opacity=".22"/><path d="M1047.2 517 1053.8 650.9 Q1052 690 1032 707.5 Q1046 670 1040 600 L1036 520Z" fill="#596070" opacity=".25"/><path d="M915 472.5 1030 444 1086.8 448 969.8 486.6Z" fill="#8c8786"/><path d="M922 470 Q975 466 1034 441 L1040 444 Q990 466 940 476Z" fill="#2b313d" opacity=".85"/><path d="M915 472.5 969.8 486.6 975.5 543.2 928.3 523.4Z" fill="#827f80"/><path d="M969.8 486.6 1086.8 448 1087.7 495 975.5 543.2Z" fill="#3d4451"/><g fill="none" stroke="#b8f0b4" stroke-width="1.4" opacity=".8"><ellipse cx="940.6" cy="481.9" rx="103" ry="30" transform="rotate(-3 940.6 481.9)"/><path d="M870.3 654.2A92 47.6 0 0 1 1054.3 654.2" opacity=".6"/><path d="M870.3 654.2A92 47.6 0 0 0 1054.3 654.2" stroke-width="2.2"/><path d="M855.7 487.5 Q850 400 932 379 Q1000 395 1017 515.8"/><path d="M932 379 Q885 395 884 480 L905 670 Q930 742 965 738" opacity=".7"/><path d="M932 379 Q975 400 988 480 L1000 640 Q1005 720 965 738" opacity=".7"/><path d="M888.7 698 Q915 742 965 738 Q1020 734 1029.2 688.7"/><path d="M915 472.5 969.8 486.6 1086.8 448M969.8 486.6 975.5 543.2 1087.7 495M915 472.5 928.3 523.4 975.5 543.2"/><path d="M899 478 902 530 975 556 1048 527"/></g><path d="M855.7 487.5 888.7 698M1017 500 1029.2 688.7" stroke="#b8f0b4" stroke-width="2" stroke-dasharray="6 2.5" fill="none" opacity=".9"/><clipPath id="suntop"><path d="M800 260H1080V480H1040L1035.8 440.4A104.5 104.5 0 0 0 834.9 470.6L835 480H800Z"/></clipPath><g clip-path="url(#suntop)"><circle cx="933.4" cy="377.2" r="36" fill="#ffe4cf"/><g stroke="#ffe4cf" stroke-width="12.3" stroke-linecap="round"><line x1="933.4" y1="325.2" x2="933.4" y2="290.4"/><line x1="952.53" y1="331.01" x2="958.27" y2="317.15"/><line x1="968.76" y1="341.84" x2="989.97" y2="320.63"/><line x1="979.59" y1="358.07" x2="993.45" y2="352.33"/><line x1="985.4" y1="377.2" x2="1020.2" y2="377.2"/><line x1="979.59" y1="396.33" x2="993.45" y2="402.07"/><line x1="968.76" y1="412.56" x2="989.97" y2="433.77"/><line x1="952.53" y1="423.39" x2="958.27" y2="437.25"/><line x1="933.4" y1="429.2" x2="933.4" y2="464"/><line x1="914.27" y1="423.39" x2="908.53" y2="437.25"/><line x1="898.04" y1="412.56" x2="876.83" y2="433.77"/><line x1="887.21" y1="396.33" x2="873.35" y2="402.07"/><line x1="881.4" y1="377.2" x2="846.6" y2="377.2"/><line x1="887.21" y1="358.07" x2="873.35" y2="352.33"/><line x1="898.04" y1="341.84" x2="876.83" y2="320.63"/><line x1="914.27" y1="331.01" x2="908.53" y2="317.15"/></g></g><clipPath id="sunin"><path d="M838.7 500 834.9 470.6 A104.5 104.5 0 0 1 1035.8 440.4 L1086.8 448 1087.7 495 1047.2 517 1049 556.6 1052.8 613.2 1053.8 650.9 Q1053 668 1047.2 681.1 Q1041 696 1032 707.5 Q1021 720 1007.5 728.3 Q994 736 979.2 739.6 Q965 742 950.9 739.6 Q935 737 920.8 730.2 Q908 724 898.1 715.1 Q887 705 879.2 692.5 Q873 681 869.8 666 L862.3 617 849 556.6Z"/></clipPath><g clip-path="url(#sunin)" opacity=".42"><circle cx="933.4" cy="377.2" r="36" fill="#ffe4cf"/><g stroke="#ffe4cf" stroke-width="12.3" stroke-linecap="round"><line x1="933.4" y1="325.2" x2="933.4" y2="290.4"/><line x1="952.53" y1="331.01" x2="958.27" y2="317.15"/><line x1="968.76" y1="341.84" x2="989.97" y2="320.63"/><line x1="979.59" y1="358.07" x2="993.45" y2="352.33"/><line x1="985.4" y1="377.2" x2="1020.2" y2="377.2"/><line x1="979.59" y1="396.33" x2="993.45" y2="402.07"/><line x1="968.76" y1="412.56" x2="989.97" y2="433.77"/><line x1="952.53" y1="423.39" x2="958.27" y2="437.25"/><line x1="933.4" y1="429.2" x2="933.4" y2="464"/><line x1="914.27" y1="423.39" x2="908.53" y2="437.25"/><line x1="898.04" y1="412.56" x2="876.83" y2="433.77"/><line x1="887.21" y1="396.33" x2="873.35" y2="402.07"/><line x1="881.4" y1="377.2" x2="846.6" y2="377.2"/><line x1="887.21" y1="358.07" x2="873.35" y2="352.33"/><line x1="898.04" y1="341.84" x2="876.83" y2="320.63"/><line x1="914.27" y1="331.01" x2="908.53" y2="317.15"/></g></g><circle cx="955.5" cy="567" r="67" fill="#d6dade" opacity=".55"/><path d="M964.2 518 929.2 565 949 567 946.5 614 981 568.4 959 566.5Z" fill="#2d8bb0" opacity=".8" stroke="#2d8bb0" stroke-width="2" stroke-linejoin="round"/><path d="M961.3 570.8 953 486" stroke="#58e820" stroke-width="3"/><path d="M951 461 943.6 487 961.4 485Z" fill="#58e820"/><path d="M961.3 570.8 884 604" stroke="#e23a2a" stroke-width="2.6"/><path d="M862.3 615.1 886 597 891.4 614.2Z" fill="#e81408"/><path d="M961.3 570.8 1026 592" stroke="#2858ff" stroke-width="2.6"/><path d="M1047.2 599 1025.4 583 1022 601Z" fill="#1040ff"/><path d="M961.3 570.8 958 548 940 557 942 580Z" fill="#2a5cc0" opacity=".75" stroke="#1848ff" stroke-width="1.3"/><path d="M961.3 570.8 958 548 977.6 553 980 574Z" fill="#d09090" opacity=".55" stroke="#e02020" stroke-width="1.3"/><path d="M961.3 570.8 980 574 961 585 944 580Z" fill="#30a860" opacity=".75" stroke="#40e020" stroke-width="1.3"/><clipPath id="gearclip"><path d="M500 320H622.6L530 427.6 500 440Z"/></clipPath><g clip-path="url(#gearclip)"><circle cx="529.6" cy="376.4" r="3.4" fill="#f4f4f4"/><circle cx="532" cy="396.4" r="3.6" fill="#f4f4f4"/><circle cx="577" cy="352" r="3" fill="#f4f4f4"/><circle cx="556.5" cy="340.6" r="3.2" fill="#f6f6f6"/><circle cx="563.5" cy="337.6" r="4" fill="#f6f6f6"/><circle cx="572" cy="344.4" r="2.5" fill="#f6f6f6"/><path d="M556.91 353.9 558.9 342.47 572.76 346.18 568.76 357.08 574.17 361.23 583.66 354.55 590.84 366.98 580.31 371.85 581.2 378.61 592.63 380.6 588.92 394.46 578.02 390.46 573.87 395.87 580.55 405.36 568.12 412.54 563.25 402.01 556.49 402.9 554.5 414.33 540.64 410.62 544.64 399.72 539.23 395.57 529.74 402.25 522.56 389.82 533.09 384.95 532.2 378.19 520.77 376.2 524.48 362.34 535.38 366.34 539.53 360.93 532.85 351.44 545.28 344.26 550.15 354.79 Z" fill="url(#gear)" stroke="url(#gear)" stroke-width="3" stroke-linejoin="round"/><circle cx="564.3" cy="382.4" r="15.7" fill="none" stroke="#f4f4f4" stroke-width="5"/></g><path d="M601 346 531.6 425.5" stroke="#d4d4d4" stroke-width="3"/><circle cx="533.3" cy="423.1" r="8.8" fill="#f6f6f6"/><path d="M533.3 414.3 537 423M541 419 533 421M540 428 531.6 423.6M531 431.6 530.6 423M525 427 533 425M526 418 534 422.6" stroke="#707070" stroke-width="1.4" fill="none"/><circle cx="533.3" cy="423.1" r="3" fill="#f6f6f6"/><path d="M604.2 397.5 617.8 407.2 617.4 409.6 606 409.6 604.2 407Z" fill="#f8f8f8"/><path d="M619.7 368.8 620 406 595 387.4Z" fill="#bf0000"/><path d="M603.4 346.7 535.6 424.4H603.8Z" fill="url(#redcam)"/><polygon points="929.2,812 988.3,841.5 988.3,863.31 929.2,832.58" fill="#000" opacity="0.03"/><polygon points="929.2,832.58 988.3,863.31 988.3,886.57 929.2,854.53" fill="#000" opacity="0.11"/><polygon points="929.2,854.53 988.3,886.57 988.3,914.2 929.2,880.6" fill="#000" opacity="0.17"/><polygon points="988.3,841.5 1047.4,812 1047.4,832.58 988.3,863.31" fill="#000" opacity="0.03"/><polygon points="988.3,863.31 1047.4,832.58 1047.4,854.53 988.3,886.57" fill="#000" opacity="0.11"/><polygon points="988.3,886.57 1047.4,854.53 1047.4,880.6 988.3,914.2" fill="#000" opacity="0.17"/><polygon points="988.3,781.3 1047.4,812 988.3,841.5 929.2,812" fill="#000" opacity=".02"/><path d="M988.3 781.3 1047.4 812V880.6L988.3 914.2 929.2 880.6V812Z M929.2 812 988.3 841.5 1047.4 812M988.3 841.5V914.2" fill="none" stroke="#ffffff" stroke-opacity=".36" stroke-width="7.4" stroke-linejoin="round"/><rect x="463.1" y="152.2" width="47.7" height="180.6" rx="4.5" fill="#1b1e21" opacity=".97"/><path d="M477 160.4H497M477 163.7H497" stroke="#4f5458" stroke-width="1.2"/><path d="M467 177Q467 173.9 470 173.9H504.2Q507.2 173.9 507.2 177V198.8H467Z" fill="#595959"/><rect x="467" y="199.9" width="40.2" height="24.9" fill="#46607c"/><rect x="467" y="226" width="40.2" height="24.8" fill="#595959"/><rect x="467" y="252" width="40.2" height="24.8" fill="#595959"/><rect x="467" y="278" width="40.2" height="24.8" fill="#595959"/><path d="M467 304.2H507.2V326Q507.2 329 504.2 329H470Q467 329 467 326Z" fill="#595959"/><path d="M477.9 184.1 479.6 183.6 482.4 186.7 483.1 182.5 481.9 178.0 483.1 177.0 484.5 177.7 485.5 183.2 486.2 177.3 487.4 176.1 488.5 177.3 489.3 183.2 490.2 178.2 491.4 177.3 492.6 178.2 492.3 184.3 493.7 182.0 495.2 181.3 496.1 182.2 493.3 189.1 490.9 195.0 484.1 195.0 480.5 189.5 478.6 186.0Z" fill="#c8c8c8" stroke="#c8c8c8" stroke-width=".7" stroke-linejoin="round"/><g stroke="#f2f2f2" stroke-width="1.7" fill="none"><path d="M486.9 202.6V209.6M486.9 214.4V221.6M477.6 212H484.5M489.3 212H496.4"/><path d="M483.8 205.8 486.9 202.6 490 205.8M483.8 218.4 486.9 221.6 490 218.4M480.8 208.9 477.6 212 480.8 215.1M493.2 208.9 496.4 212 493.2 215.1"/></g><g stroke="#cfcfcf" stroke-width="1.5" fill="none"><path d="M491 230.4A9 9 0 0 1 487.6 246.9M482.8 245.6A9 9 0 0 1 486.2 229.1"/><path d="M490.2 229.4H495V234.2M483.6 246.6H478.8V241.8"/></g><g stroke="#cfcfcf" stroke-width="1.4" fill="none"><rect x="478.4" y="255.4" width="17.2" height="17.2" rx="1.8"/><path d="M478.4 267.2H484V272.6"/><path d="M486 265.4 492.2 259.2M487.6 259H492.4V263.8"/></g><g stroke="#cfcfcf" stroke-width="1.5" fill="none"><path d="M482 283.2H492M482 297.2H492M479.8 285.6V294.8M494.2 285.6V294.8"/></g><g fill="#cfcfcf"><rect x="477.9" y="281.4" width="3.7" height="3.7"/><rect x="492.2" y="281.4" width="3.7" height="3.7"/><rect x="477.9" y="295.2" width="3.7" height="3.7"/><rect x="492.2" y="295.2" width="3.7" height="3.7"/></g><g stroke="#cfcfcf" stroke-width="1.3" fill="none"><circle cx="486.9" cy="316.3" r="8.4" stroke-dasharray="10.2 3"  stroke-dashoffset="5.1"/><path d="M486.9 311V321.6M481.6 316.3H492.2" stroke-width="1.6"/></g><g fill="#cfcfcf"><path d="M484.3 312.2 486.9 309.4 489.5 312.2ZM484.3 320.4 486.9 323.2 489.5 320.4ZM482.8 313.7 480 316.3 482.8 318.9ZM491 313.7 493.8 316.3 491 318.9Z"/><path d="M493.4 306H497V309.6ZM480.4 326.6H476.8V323Z"/></g><path d="M1703 161H1723M1703 164.2H1723" stroke="#5f6a78" stroke-width="1.2"/><g transform="translate(1762.6 213.7)"><path d="M0 0 -26 -8 -22 -1Z" fill="#e0e0e0"/><path d="M0 0 18 -12 20 -3Z" fill="#e4e4e4"/><path d="M0 0 -5 30 5 30Z" fill="#d8d8d8"/><ellipse cx="-25" cy="-5" rx="3" ry="5" fill="#f0f0f0"/><ellipse cx="19" cy="-8" rx="3" ry="5.5" fill="#f4f4f4"/><ellipse cx="0" cy="30" rx="5.5" ry="2.6" fill="#c8c8c8"/><path d="M0 -6 -9 -33H9Z" fill="#8ad838"/><path d="M-4 6 -31 12Q-30 24 -20 24Z" fill="#d84a3c"/><path d="M6 6 35 4Q38 14 31 20Z" fill="#4a70d8"/><path d="M-10 -5 0 -10 10 -5V7L0 13 -10 7Z" fill="#dcdcdc"/><path d="M-10 -5 0 0 10 -5 0 -10Z" fill="#f4f4f4"/><path d="M0 0V13L10 7V-5Z" fill="#b8b8b8"/></g><text x="1757" y="173" font-size="14" fill="#f4f4f4" style="font-family:'Liberation Sans',sans-serif;font-weight:bold">y</text><text x="1719.6" y="238.5" font-size="14" fill="#f4f4f4" style="font-family:'Liberation Sans',sans-serif;font-weight:bold">x</text><text x="1800.8" y="229" font-size="14" fill="#f4f4f4" style="font-family:'Liberation Sans',sans-serif;font-weight:bold">z</text><path d="M1800 175.5H1808V181H1800Z" fill="#e4e4ea"/><path d="M1801.4 175.5V173.4Q1801.4 170.6 1804 170.6" fill="none" stroke="#e4e4ea" stroke-width="1.3"/><path d="M1745 272 1732.4 277.6 1745 283.2M1732.4 277.6H1745" fill="none" stroke="#e0e0e0" stroke-width="1.2"/><text x="1748.6" y="283.2" font-size="15.4" fill="#e6e6e6" style="font-family:'Liberation Sans',sans-serif" textLength="40.6">Persp</text></svg>
<div style="left:460.2px;top:92.1px;width:1372.6px;height:23.9px;background:#282828;border-radius:4px 4px 0 0"></div>
<div style="left:460.2px;top:92.1px;width:97.6px;height:23.9px;background:#3c3c3c;border-radius:4px 4px 0 0"></div>
<svg style="left:471px;top:98px;" width="13" height="13" viewBox="0 0 13 13"><path d="M3.9 1V12M9 1V12M1 4H12M1 9.1H12M6.5 0V13M0 6.5H13" stroke="#c4c4c4" stroke-width="1.15"/></svg>
<span style="left:489.4px;top:95.2px;line-height:20px;font-size:15.4px;color:#d2d2d2;transform:scaleX(1.0604);transform-origin:0 50%;">Scene</span>
<svg style="left:567px;top:99px;" width="18" height="11" viewBox="0 0 18 11"><rect x="0" y=".6" width="18" height="9.8" rx="4.9" fill="#c4c4c4"/><path d="M3.4 5.5H7.4M5.4 3.5V7.5" stroke="#282828" stroke-width="1.3"/><circle cx="11.6" cy="5.5" r="1.1" fill="#282828"/><circle cx="14.6" cy="5.5" r="1.1" fill="#282828"/></svg>
<span style="left:587.8px;top:95.2px;line-height:20px;font-size:15.4px;color:#d2d2d2;transform:scaleX(1.0111);transform-origin:0 50%;">Game</span>
<svg style="left:664px;top:98.5px;" width="14" height="13" viewBox="0 0 14 13"><rect x="0" y="0" width="14" height="2" fill="#c4c4c4"/><path d="M1 3.6H13V13H1Z" fill="#c4c4c4"/><rect x="4.6" y="5.6" width="4.8" height="1.7" fill="#282828"/></svg>
<span style="left:682.3px;top:95.2px;line-height:20px;font-size:15.4px;color:#d2d2d2;transform:scaleX(1.0674);transform-origin:0 50%;">Package Manager</span>
<span style="left:845.6px;top:95.2px;line-height:20px;font-size:15.4px;color:#d2d2d2;transform:scaleX(1.0463);transform-origin:0 50%;">Player (Input Actions Editor)</span>
<svg style="left:1814.1px;top:96.6px;" width="4" height="13.4" viewBox="0 0 4 13.4"><circle cx="2" cy="2" r="1.4" fill="#c4c4c4"/><circle cx="2" cy="6.7" r="1.4" fill="#c4c4c4"/><circle cx="2" cy="11.4" r="1.4" fill="#c4c4c4"/></svg>
<div style="left:460.2px;top:116px;width:1372.6px;height:32.6px;background:#3c3c3c;"></div>
<div style="left:468px;top:122px;width:1px;height:20px;background:#5a5a5a;"></div>
<div style="left:472.3px;top:122px;width:1px;height:20px;background:#5a5a5a;"></div>
<div style="left:686px;top:122px;width:1px;height:20px;background:#5a5a5a;"></div>
<div style="left:690.3px;top:122px;width:1px;height:20px;background:#5a5a5a;"></div>
<div style="left:480px;top:120px;width:101px;height:24.7px;background:#585858;border-radius:3px"></div>
<svg style="left:484.5px;top:123.5px;" width="18" height="18" viewBox="0 0 18 18"><rect x=".7" y=".7" width="16.6" height="16.6" rx="2" fill="none" stroke="#c4c4c4" stroke-width="1.3"/><path d="M3.4 14.6 14.6 3.4" stroke="#c4c4c4" stroke-width="1.1"/><circle cx="9" cy="9" r="2.7" fill="#585858" stroke="#f0643c" stroke-width="1.5"/></svg>
<span style="left:507px;top:123px;line-height:20px;font-size:15.4px;color:#d2d2d2;transform:scaleX(1.0450);transform-origin:0 50%;">Center</span>
<svg style="left:563.2px;top:130.25px;" width="10" height="5.5" viewBox="0 0 10 5.5"><path d="M0 0H10L5 5.5Z" fill="#c4c4c4"/></svg>
<div style="left:584.9px;top:120px;width:89px;height:24.7px;background:#585858;border-radius:3px"></div>
<svg style="left:590px;top:123px;" width="19" height="19" viewBox="0 0 19 19"><path d="M8.5 1 15.2 4.6V11.8L8.5 15.4 1.8 11.8V4.6Z M1.9 4.7 8.5 8.2 15.1 4.7 M8.5 8.2V15.2" fill="none" stroke="#c4c4c4" stroke-width="1.25" stroke-linejoin="round"/><circle cx="14.2" cy="14.2" r="3" fill="#585858" stroke="#f0643c" stroke-width="1.6"/></svg>
<span style="left:611.7px;top:123px;line-height:20px;font-size:15.4px;color:#d2d2d2;transform:scaleX(1.0431);transform-origin:0 50%;">Local</span>
<svg style="left:656.5px;top:130.25px;" width="10" height="5.5" viewBox="0 0 10 5.5"><path d="M0 0H10L5 5.5Z" fill="#c4c4c4"/></svg>
<div style="left:698.1px;top:120px;width:27.6px;height:24.7px;background:#46607c;border-radius:3px 0 0 3px"></div>
<div style="left:726.6px;top:120px;width:17.3px;height:24.7px;background:#46607c;border-radius:0 3px 3px 0"></div>
<svg style="left:703px;top:124px;" width="18" height="17" viewBox="0 0 18 17"><path d="M4 0V14M10 0V7M0 3H16M0 9H9M0 13H7" stroke="#f0f0f0" stroke-width="1.2" fill="none"/></svg>
<span style="left:708.7px;top:130.9px;line-height:12px;font-size:12.5px;color:#f4f4f4;font-weight:bold;transform:scaleX(1.0400);transform-origin:0 50%;">Y</span>
<svg style="left:730.3px;top:130.25px;" width="10" height="5.5" viewBox="0 0 10 5.5"><path d="M0 0H10L5 5.5Z" fill="#d6d6d6"/></svg>
<div style="left:747.8px;top:120px;width:28.1px;height:24.7px;background:#4a4a4a;border-radius:3px 0 0 3px"></div>
<div style="left:777px;top:120px;width:16.8px;height:24.7px;background:#4a4a4a;border-radius:0 3px 3px 0"></div>
<svg style="left:753px;top:124px;" width="18" height="17" viewBox="0 0 18 17"><path d="M3 0V12M8 0V8M0 3H13M0 8H6" stroke="#8c8c8c" stroke-width="1.1" fill="none" stroke-dasharray="2.4 1"/><path d="M9 14.6H13.4A2.7 2.7 0 0 0 13.4 9.2H11" fill="none" stroke="#c4532e" stroke-width="2.2"/><rect x="6" y="13.2" width="2.6" height="2.6" fill="#c8c8c8"/></svg>
<svg style="left:780.5px;top:130.25px;" width="10" height="5.5" viewBox="0 0 10 5.5"><path d="M0 0H10L5 5.5Z" fill="#7a7a7a"/></svg>
<div style="left:797.7px;top:120px;width:46.3px;height:24.7px;background:#585858;border-radius:3px"></div>
<svg style="left:802.5px;top:124px;" width="18" height="16" viewBox="0 0 18 16"><path d="M.6 0V16M16.4 0V16M3.8 3V12M7 5V12M10 3V12M13.2 5V12M.6 9.2H16.4" stroke="#c4c4c4" stroke-width="1.1" fill="none"/></svg>
<svg style="left:826px;top:130.25px;" width="10" height="5.5" viewBox="0 0 10 5.5"><path d="M0 0H10L5 5.5Z" fill="#c4c4c4"/></svg>
<div style="left:1445.6px;top:122px;width:1px;height:20px;background:#5a5a5a;"></div>
<div style="left:1449.9px;top:122px;width:1px;height:20px;background:#5a5a5a;"></div>
<div style="left:1457.7px;top:120px;width:45.5px;height:24.7px;background:#585858;border-radius:3px"></div>
<svg style="left:1462.5px;top:123.5px;" width="19" height="18" viewBox="0 0 19 18"><circle cx="9" cy="9" r="8.2" fill="#d0d0d0"/><circle cx="7.6" cy="7.6" r="6.2" fill="#585858"/></svg>
<svg style="left:1486px;top:130.25px;" width="10" height="5.5" viewBox="0 0 10 5.5"><path d="M0 0H10L5 5.5Z" fill="#c4c4c4"/></svg>
<div style="left:1507px;top:120px;width:40.1px;height:24.7px;background:#585858;border-radius:3px"></div>
<span style="left:1518.5px;top:123.2px;line-height:20px;font-size:15px;color:#d2d2d2;transform:scaleX(0.8970);transform-origin:0 50%;">2D</span>
<div style="left:1550.9px;top:120px;width:40.1px;height:24.7px;background:#46607c;border-radius:3px"></div>
<svg style="left:1564.5px;top:124px;" width="13" height="17" viewBox="0 0 13 17"><path d="M6.5 .6A5.6 5.6 0 0 1 9.6 10.9V12.4H3.4V10.9A5.6 5.6 0 0 1 6.5 .6Z" fill="#f0f0f0"/><path d="M4 13.6H9A2.5 2.5 0 0 1 4 13.6Z" fill="#f0f0f0"/></svg>
<div style="left:1594.8px;top:120px;width:40.3px;height:24.7px;background:#585858;border-radius:3px"></div>
<svg style="left:1607.5px;top:125px;" width="16" height="14" viewBox="0 0 16 14"><path d="M.6 3.6H2.4V9.4H.6ZM3.4 3.6 7.4 .6V12.4L3.4 9.4Z" fill="#c4c4c4"/><path d="M9.2 8 13.8 12.6M13.8 8 9.2 12.6" stroke="#c4c4c4" stroke-width="1.3"/></svg>
<div style="left:1638.9px;top:120px;width:27.7px;height:24.7px;background:#46607c;border-radius:3px 0 0 3px"></div>
<div style="left:1668px;top:120px;width:17px;height:24.7px;background:#46607c;border-radius:0 3px 3px 0"></div>
<svg style="left:1644.5px;top:124.5px;" width="17" height="16" viewBox="0 0 17 16"><path d="M1 8.6 7 5.6 13.6 8.6 7 11.8Z" fill="#f0f0f0"/><path d="M1.4 11.2 7 14 12.8 11.2" fill="none" stroke="#f0f0f0" stroke-width="1.5"/><path d="M12.4 .2 13.5 3 16.4 4.2 13.5 5.4 12.4 8.2 11.3 5.4 8.4 4.2 11.3 3Z" fill="#f0f0f0"/></svg>
<svg style="left:1671.5px;top:130.25px;" width="10" height="5.5" viewBox="0 0 10 5.5"><path d="M0 0H10L5 5.5Z" fill="#d6d6d6"/></svg>
<div style="left:1688.8px;top:120px;width:40.3px;height:24.7px;background:#46607c;border-radius:3px"></div>
<svg style="left:1699.5px;top:124px;" width="19" height="16" viewBox="0 0 19 16"><path d="M1 8.6Q9.5 -.4 18 8.6Q9.5 16.6 1 8.6Z" fill="none" stroke="#f0f0f0" stroke-width="1.3"/><circle cx="9.5" cy="8.4" r="2.6" fill="#f0f0f0"/><path d="M2.6 15.4 16 .6" stroke="#f0f0f0" stroke-width="1.4"/></svg>
<div style="left:1733px;top:120px;width:46px;height:24.7px;background:#585858;border-radius:3px"></div>
<svg style="left:1739px;top:126.5px;" width="18" height="12" viewBox="0 0 18 12"><rect x=".4" y=".6" width="10" height="10.4" fill="#c4c4c4"/><path d="M11.6 4 15.6 .8V10.8L11.6 7.6Z" fill="#c4c4c4"/></svg>
<svg style="left:1761.5px;top:130.25px;" width="10" height="5.5" viewBox="0 0 10 5.5"><path d="M0 0H10L5 5.5Z" fill="#c4c4c4"/></svg>
<div style="left:1782.9px;top:120px;width:26.7px;height:24.7px;background:#46607c;border-radius:3px 0 0 3px"></div>
<div style="left:1811px;top:120px;width:18.2px;height:24.7px;background:#46607c;border-radius:0 3px 3px 0"></div>
<svg style="left:1786.5px;top:122.5px;" width="20" height="20" viewBox="0 0 20 20"><circle cx="10" cy="10.4" r="7.6" fill="none" stroke="#f0f0f0" stroke-width="1.4"/><path d="M10 3V17.6M3 12.4 10 10.4 17 12.4" fill="none" stroke="#f0f0f0" stroke-width="1.2"/><circle cx="10" cy="2.6" r="1.8" fill="#f0f0f0"/><circle cx="2.8" cy="12.6" r="1.8" fill="#f0f0f0"/><circle cx="17.2" cy="12.6" r="1.8" fill="#f0f0f0"/><circle cx="10" cy="10.4" r="1.6" fill="#f0f0f0"/></svg>
<svg style="left:1815px;top:130.25px;" width="10" height="5.5" viewBox="0 0 10 5.5"><path d="M0 0H10L5 5.5Z" fill="#d6d6d6"/></svg>
<div style="left:0px;top:929.6px;width:1833.8px;height:24.4px;background:#282828;border-radius:0 4px 0 0"></div>
<div style="left:458.2px;top:929.6px;width:108.5px;height:24.4px;background:#3c3c3c;border-radius:4px 4px 0 0"></div>
<svg style="left:9.3px;top:936px;" width="14" height="12" viewBox="0 0 14 12"><path d="M0 1.2Q0 0 1.2 0H5.2L6.6 2H12.8Q14 2 14 3.2V10.8Q14 12 12.8 12H1.2Q0 12 0 10.8Z" fill="#c4c4c4"/></svg>
<span style="left:27.2px;top:932.9px;line-height:20px;font-size:15.4px;color:#d2d2d2;transform:scaleX(1.0954);transform-origin:0 50%;">Project</span>
<svg style="left:114px;top:937px;" width="14" height="11" viewBox="0 0 14 11"><path d="M1 1 5.4 5.5 1 10M5.4 5.5H13M10.4 2.8 13 5.5 10.4 8.2" fill="none" stroke="#c4c4c4" stroke-width="1.6"/></svg>
<span style="left:131.5px;top:932.9px;line-height:20px;font-size:15.4px;color:#d2d2d2;transform:scaleX(1.0581);transform-origin:0 50%;">Animator</span>
<svg style="left:228.3px;top:935px;" width="15" height="15" viewBox="0 0 15 15"><circle cx="7.5" cy="7.5" r="7.2" fill="#c4c4c4"/><path d="M7.5 2.4V7.9H12" fill="none" stroke="#282828" stroke-width="1.6"/></svg>
<span style="left:247.2px;top:932.9px;line-height:20px;font-size:15.4px;color:#d2d2d2;transform:scaleX(1.0690);transform-origin:0 50%;">Animation</span>
<svg style="left:354px;top:936px;" width="15" height="13" viewBox="0 0 15 13"><rect x=".7" y=".7" width="13.6" height="11.6" fill="none" stroke="#c4c4c4" stroke-width="1.4"/><path d="M3.6 .7V12.3M11.4 .7V12.3M.7 4.4H3.6M.7 8.4H3.6M11.4 4.4H14.3M11.4 8.4H14.3M3.6 6.4H11.4" stroke="#c4c4c4" stroke-width="1.2"/></svg>
<span style="left:372.8px;top:932.9px;line-height:20px;font-size:15.4px;color:#d2d2d2;transform:scaleX(1.0812);transform-origin:0 50%;">Timeline</span>
<svg style="left:468.8px;top:935.8px;" width="12.6" height="13.4" viewBox="0 0 12.6 13.4"><rect width="12.6" height="13.4" fill="#c8c8c8"/><path d="M1.4 3H11.2M1.4 5.8H11.2M1.4 8.6H11.2M1.4 11.2H11.2" stroke="#3c3c3c" stroke-width="1.2"/></svg>
<span style="left:486.5px;top:932.9px;line-height:20px;font-size:15.4px;color:#d2d2d2;transform:scaleX(1.0549);transform-origin:0 50%;">Console</span>
<svg style="left:1814.1px;top:934.8px;" width="4" height="13.4" viewBox="0 0 4 13.4"><circle cx="2" cy="2" r="1.4" fill="#c4c4c4"/><circle cx="2" cy="6.7" r="1.4" fill="#c4c4c4"/><circle cx="2" cy="11.4" r="1.4" fill="#c4c4c4"/></svg>
<div style="left:0px;top:954px;width:1833.8px;height:25px;background:#3c3c3c;"></div>
<div style="left:0px;top:978.5px;width:1833.8px;height:1px;background:#232323;"></div>
<span style="left:4.4px;top:957.9px;line-height:20px;font-size:15.4px;color:#d2d2d2;transform:scaleX(1.0680);transform-origin:0 50%;">Clear</span>
<div style="left:50.3px;top:958px;width:1px;height:16.5px;background:#2a2a2a;"></div>
<svg style="left:56.5px;top:964.5px;" width="9" height="5" viewBox="0 0 9 5"><path d="M0 0H9L4.5 5Z" fill="#c4c4c4"/></svg>
<div style="left:71px;top:954px;width:1px;height:24.5px;background:#2a2a2a;"></div>
<div style="left:72px;top:954px;width:75.4px;height:24.5px;background:#505050;"></div>
<span style="left:76px;top:957.9px;line-height:20px;font-size:15.4px;color:#d2d2d2;transform:scaleX(1.0631);transform-origin:0 50%;">Collapse</span>
<div style="left:147.4px;top:954px;width:1px;height:24.5px;background:#2a2a2a;"></div>
<span style="left:154.4px;top:957.9px;line-height:20px;font-size:15.4px;color:#d2d2d2;transform:scaleX(1.0090);transform-origin:0 50%;">Error Pause</span>
<div style="left:242.3px;top:954px;width:1px;height:24.5px;background:#2a2a2a;"></div>
<span style="left:246.2px;top:957.9px;line-height:20px;font-size:15.4px;color:#d2d2d2;transform:scaleX(1.0565);transform-origin:0 50%;">Editor</span>
<svg style="left:292.9px;top:964.5px;" width="9" height="5" viewBox="0 0 9 5"><path d="M0 0H9L4.5 5Z" fill="#c4c4c4"/></svg>
<div style="left:307.7px;top:954px;width:1px;height:24.5px;background:#2a2a2a;"></div>
<div style="left:1326.2px;top:957px;width:374.6px;height:19.5px;background:#2a2a2a;border-radius:4px;border:1px solid #212121;box-sizing:border-box"></div>
<svg style="left:1331px;top:962px;" width="11" height="11" viewBox="0 0 11 11"><circle cx="4" cy="4" r="2.6" fill="none" stroke="#b0b0b0" stroke-width="1.5"/><path d="M6 6 9.6 9.6" stroke="#b0b0b0" stroke-width="1.7"/></svg>
<div style="left:1705px;top:954.5px;width:40.6px;height:24px;background:#4f4f4f;"></div>
<svg style="left:1711px;top:959px;" width="17" height="17" viewBox="0 0 17 17"><path d="M8 .6A7.4 7.4 0 1 1 8 15.4 7.4 7.4 0 0 1 8 .6Z" fill="#8c8c8c"/><path d="M12 13 15 16.4 14.4 11Z" fill="#8c8c8c"/><rect x="7.1" y="3.4" width="1.9" height="6.2" rx=".9" fill="#4f4f4f"/><circle cx="8" cy="11.8" r="1.15" fill="#4f4f4f"/></svg>
<span style="left:1731.9px;top:958px;line-height:20px;font-size:15.4px;color:#d2d2d2;transform:scaleX(1.0400);transform-origin:0 50%;">0</span>
<div style="left:1747px;top:954.5px;width:42px;height:24px;background:#4f4f4f;"></div>
<svg style="left:1753.4px;top:959px;" width="17" height="16" viewBox="0 0 17 16"><path d="M8.4 .6 16.4 15H.4Z" fill="#8c8c8c"/><rect x="7.5" y="5.4" width="1.8" height="5.4" rx=".9" fill="#4f4f4f"/><circle cx="8.4" cy="12.8" r="1.1" fill="#4f4f4f"/></svg>
<span style="left:1773.6px;top:958px;line-height:20px;font-size:15.4px;color:#d2d2d2;transform:scaleX(1.0400);transform-origin:0 50%;">0</span>
<div style="left:1790.4px;top:954.5px;width:41.6px;height:24px;background:#4f4f4f;"></div>
<svg style="left:1795.7px;top:959px;" width="17" height="17" viewBox="0 0 17 17"><path d="M5.2 .6H11.4L16 5.2V11.4L11.4 16H5.2L.6 11.4V5.2Z" fill="#e6e6e6"/><rect x="7.4" y="3.4" width="1.9" height="6.4" rx=".9" fill="#4f4f4f"/><circle cx="8.3" cy="12.2" r="1.2" fill="#4f4f4f"/></svg>
<span style="left:1816.7px;top:958px;line-height:20px;font-size:15.4px;color:#d2d2d2;transform:scaleX(1.0400);transform-origin:0 50%;">0</span>
<div style="left:1704px;top:954.5px;width:1.2px;height:24px;background:#2e2e2e;"></div>
<div style="left:1746px;top:954.5px;width:1.2px;height:24px;background:#2e2e2e;"></div>
<div style="left:1789.6px;top:954.5px;width:1.2px;height:24px;background:#2e2e2e;"></div>
<div style="left:0px;top:979.5px;width:1833.8px;height:371px;background:#383838;"></div>
<div style="left:0px;top:1350.5px;width:1833.8px;height:1px;background:#232323;"></div>
<div style="left:0px;top:1351.5px;width:1833.8px;height:161.5px;background:#383838;"></div>
<div style="left:0px;top:1513px;width:2560px;height:27px;background:#191919;"></div>
<div style="left:2427.6px;top:1515.2px;width:1px;height:25px;background:#242424;"></div>
<div style="left:2460.6px;top:1515.2px;width:1px;height:25px;background:#242424;"></div>
<div style="left:2494px;top:1515.2px;width:1px;height:25px;background:#242424;"></div>
<div style="left:2526.8px;top:1515.2px;width:1px;height:25px;background:#242424;"></div>
<div style="left:2559.3px;top:1515.2px;width:1px;height:25px;background:#242424;"></div>
<svg style="left:2434px;top:1518px;" width="20" height="20" viewBox="0 0 20 20"><ellipse cx="10" cy="11.6" rx="5.4" ry="6.6" fill="#c8c8c8"/><circle cx="10" cy="4.6" r="2.6" fill="#c8c8c8"/><path d="M7.4 3 5.6 .8M12.6 3 14.4 .8M4.8 8.4 1.6 6.4M15.2 8.4 17.6 4.4M4.6 12H1M15.4 12H18.6M5 15.4 2.4 18.4M15 15.4 17.4 17.6" stroke="#c8c8c8" stroke-width="1.4" fill="none"/><path d="M.6 2.2 17.4 19.8" stroke="#191919" stroke-width="3.4"/><path d="M1.6 1.4 18.6 19.2" stroke="#c8c8c8" stroke-width="1.5"/></svg>
<svg style="left:2467px;top:1518px;" width="20" height="20" viewBox="0 0 20 20"><path d="M1.6 5V14.6A7.6 3.6 0 0 0 16.8 14.6V5Z" fill="#c8c8c8"/><ellipse cx="9.2" cy="5" rx="7.6" ry="3.6" fill="#c8c8c8"/><path d="M1.6 8.4A7.6 3.6 0 0 0 16.8 8.4M1.6 12A7.6 3.6 0 0 0 16.8 12" fill="none" stroke="#191919" stroke-width="1.3"/><path d="M.2 2.6 17 19.8" stroke="#191919" stroke-width="3.4"/><path d="M1.2 1.8 18.2 19.2" stroke="#c8c8c8" stroke-width="1.5"/></svg>
<svg style="left:2500.5px;top:1518px;" width="20" height="20" viewBox="0 0 20 20"><path d="M3.4 6A8 8 0 0 1 15.6 4.2M16.6 14A8 8 0 0 1 4.4 15.8" fill="none" stroke="#c8c8c8" stroke-width="1.6"/><path d="M13.4 1.4 18.4 2.6 16.4 7ZM6.6 18.6 1.6 17.4 3.6 13Z" fill="#c8c8c8"/><path d="M10 5A3.6 3.6 0 0 1 12 11.6V13H8V11.6A3.6 3.6 0 0 1 10 5Z" fill="#c8c8c8"/><path d="M8.4 14H11.6L10 15.6Z" fill="#c8c8c8"/><path d="M1.6 2 16.4 19.6" stroke="#191919" stroke-width="3.4"/><path d="M2.6 1.2 17.6 19" stroke="#c8c8c8" stroke-width="1.5"/></svg>
<svg style="left:2532.5px;top:1518.5px;" width="19" height="19" viewBox="0 0 19 19"><circle cx="9.5" cy="9.5" r="8.2" fill="none" stroke="#c8c8c8" stroke-width="1.5"/><path d="M5.6 9.8 8.4 12.6 13.6 6.8" fill="none" stroke="#c8c8c8" stroke-width="1.9"/></svg>
<div style="left:1835px;top:92.1px;width:725px;height:23.9px;background:#282828;border-radius:4px 4px 0 0"></div>
<div style="left:1835px;top:92.1px;width:119.2px;height:23.9px;background:#3c3c3c;border-radius:4px 4px 0 0"></div>
<div style="left:1835px;top:92.1px;width:119.2px;height:2.3px;background:#3a79bb;border-radius:4px 4px 0 0"></div>
<svg style="left:1846.7px;top:98.5px;" width="13" height="13" viewBox="0 0 13 13"><circle cx="6.5" cy="6.5" r="6.3" fill="#c4c4c4"/><rect x="5.6" y="5.4" width="1.9" height="4.8" fill="#3c3c3c"/><circle cx="6.5" cy="3.5" r="1.1" fill="#3c3c3c"/></svg>
<span style="left:1864.3px;top:95.4px;line-height:20px;font-size:15.4px;color:#d2d2d2;transform:scaleX(1.0862);transform-origin:0 50%;">Inspector</span>
<svg style="left:1967px;top:97.5px;" width="11" height="15" viewBox="0 0 11 15"><path d="M5.5 .4A5 5 0 0 1 8.2 9.6V11H2.8V9.6A5 5 0 0 1 5.5 .4Z" fill="#c4c4c4"/><path d="M3.2 12.2H7.8A2.3 2.3 0 0 1 3.2 12.2Z" fill="#c4c4c4"/></svg>
<span style="left:1983.5px;top:95.4px;line-height:20px;font-size:15.4px;color:#d2d2d2;transform:scaleX(1.0938);transform-origin:0 50%;">Lighting</span>
<svg style="left:2515.5px;top:97px;" width="12" height="13" viewBox="0 0 12 13"><rect x=".8" y="6.2" width="9.6" height="5.6" fill="none" stroke="#c4c4c4" stroke-width="1.4"/><path d="M3.4 3.6Q3.4 .9 6 .9T8.8 3.8V6" fill="none" stroke="#c4c4c4" stroke-width="1.4"/></svg>
<svg style="left:2540px;top:96.9px;" width="4" height="13.4" viewBox="0 0 4 13.4"><circle cx="2" cy="2" r="1.4" fill="#c4c4c4"/><circle cx="2" cy="6.7" r="1.4" fill="#c4c4c4"/><circle cx="2" cy="11.4" r="1.4" fill="#c4c4c4"/></svg>
<div style="left:1835px;top:116px;width:725px;height:1397px;background:#383838;"></div>
<div style="left:1835px;top:116px;width:725px;height:74px;background:#3c3c3c;"></div>
<svg style="left:1843px;top:128.5px;" width="27" height="27" viewBox="0 0 27 27"><path d="M13.5 1.6 25 7.6V19.6L13.5 25.6 2 19.6V7.6Z M2.2 7.7 13.5 13.8 24.8 7.7 M13.5 13.8V25.4" fill="none" stroke="#c4c4c4" stroke-width="1.7" stroke-linejoin="round"/></svg>
<svg style="left:1868px;top:155px;" width="9" height="5" viewBox="0 0 9 5"><path d="M0 0H9L4.5 5Z" fill="#c4c4c4"/></svg>
<div style="left:1894.2px;top:130.6px;width:16.5px;height:16.5px;background:#2a2a2a;border-radius:3px;border:1px solid #1a1a1a;box-sizing:border-box"></div>
<svg style="left:1896.7px;top:133.6px;" width="12" height="11" viewBox="0 0 12 11"><path d="M1.4 5.8 4.6 9 10.6 1.8" fill="none" stroke="#e0e0e0" stroke-width="1.9"/></svg>
<div style="left:1919.3px;top:127.2px;width:538.7px;height:22.4px;background:#2a2a2a;border-radius:3px;border:1px solid #212121;border-top-color:#0d0d0d;box-sizing:border-box;"></div>
<span style="left:1921.3px;top:130.4px;line-height:20px;font-size:15.4px;color:#e4e4e4;font-weight:bold;transform:scaleX(1.0468);transform-origin:0 50%;">Player</span>
<div style="left:2463px;top:130.6px;width:16.5px;height:16.5px;background:#2a2a2a;border-radius:3px;border:1px solid #1a1a1a;box-sizing:border-box"></div>
<span style="left:2484.2px;top:129.6px;line-height:20px;font-size:15.4px;color:#c4c4c4;transform:scaleX(1.1294);transform-origin:0 50%;">Static</span>
<svg style="left:2542.5px;top:137px;" width="9" height="5" viewBox="0 0 9 5"><path d="M0 0H9L4.5 5Z" fill="#c4c4c4"/></svg>
<span style="left:1885.2px;top:159.4px;line-height:20px;font-size:15.4px;color:#c4c4c4;transform:scaleX(1.1399);transform-origin:0 50%;">Tag</span>
<div style="left:1919.3px;top:157.8px;width:290.9px;height:21.6px;background:#515151;border-radius:3px;border:1px solid #303030;box-sizing:border-box"></div>
<span style="left:1922.7px;top:158.8px;line-height:20px;font-size:15.4px;color:#d2d2d2;transform:scaleX(1.0601);transform-origin:0 50%;">Untagged</span>
<svg style="left:2193.8px;top:166.5px;" width="9" height="5" viewBox="0 0 9 5"><path d="M0 0H9L4.5 5Z" fill="#c4c4c4"/></svg>
<span style="left:2228.9px;top:159.4px;line-height:20px;font-size:15.4px;color:#c4c4c4;transform:scaleX(1.0852);transform-origin:0 50%;">Layer</span>
<div style="left:2274.8px;top:157.8px;width:278.2px;height:21.6px;background:#515151;border-radius:3px;border:1px solid #303030;box-sizing:border-box"></div>
<span style="left:2278.2px;top:158.8px;line-height:20px;font-size:15.4px;color:#d2d2d2;transform:scaleX(1.1170);transform-origin:0 50%;">Default</span>
<svg style="left:2537.5px;top:166.5px;" width="9" height="5" viewBox="0 0 9 5"><path d="M0 0H9L4.5 5Z" fill="#c4c4c4"/></svg>
<div style="left:1835px;top:190px;width:725px;height:1px;background:#1a1a1a;"></div>
<div style="left:1835px;top:191px;width:725px;height:25.9px;background:#3e3e3e;"></div>
<div style="left:1835px;top:216.9px;width:725px;height:1px;background:#303030;"></div>
<svg style="left:1843.2px;top:200.95px;" width="11" height="7" viewBox="0 0 11 7"><path d="M0 0H11L5.5 7Z" fill="#8a8a8a"/></svg>
<svg style="left:1861.5px;top:194.95px;" width="18" height="19" viewBox="0 0 18 19"><path d="M9 9.6V2.4" stroke="#9be13c" stroke-width="2.6" stroke-linecap="round"/><path d="M9 10 14.6 13.6" stroke="#f0643c" stroke-width="2.6" stroke-linecap="round"/><path d="M9 10 3.4 13.6" stroke="#54c0f4" stroke-width="2.6" stroke-linecap="round"/></svg>
<span style="left:1910px;top:194.75px;line-height:20px;font-size:15.4px;color:#e4e4e4;font-weight:bold;transform:scaleX(1.0344);transform-origin:0 50%;">Transform</span>
<svg style="left:2486.7px;top:196.95px;" width="14" height="14" viewBox="0 0 14 14"><circle cx="7" cy="7" r="6.6" fill="#c4c4c4"/></svg>
<span style="left:2489.6px;top:198.65px;line-height:12px;font-size:11.5px;color:#3e3e3e;font-weight:bold;transform:scaleX(1.0400);transform-origin:0 50%;">?</span>
<svg style="left:2511.5px;top:196.95px;" width="15" height="14" viewBox="0 0 15 14"><path d="M0 3.4H6M9 3.4H15M0 10.4H3M6 10.4H15" stroke="#c4c4c4" stroke-width="1.5"/><path d="M8.4 .6V6.2M3.6 7.6V13.2" stroke="#c4c4c4" stroke-width="1.7"/></svg>
<svg style="left:2541.8px;top:197.25px;" width="4" height="13.4" viewBox="0 0 4 13.4"><circle cx="2" cy="2" r="1.4" fill="#c4c4c4"/><circle cx="2" cy="6.7" r="1.4" fill="#c4c4c4"/><circle cx="2" cy="11.4" r="1.4" fill="#c4c4c4"/></svg>
<span style="left:1858.8px;top:225.1px;line-height:20px;font-size:15.4px;color:#c4c4c4;transform:scaleX(1.0400);transform-origin:0 50%;">Position</span>
<span style="left:2135.5px;top:225.1px;line-height:20px;font-size:15.4px;color:#c4c4c4;transform:scaleX(1.0400);transform-origin:0 50%;">X</span>
<div style="left:2155.3px;top:223.4px;width:116px;height:22.6px;background:#2a2a2a;border-radius:3px;border:1px solid #212121;border-top-color:#0d0d0d;box-sizing:border-box;"></div>
<span style="left:2158.5px;top:225.7px;line-height:20px;font-size:15.4px;color:#d2d2d2;transform:scaleX(1.0400);transform-origin:0 50%;">0</span>
<span style="left:2277.8px;top:225.1px;line-height:20px;font-size:15.4px;color:#c4c4c4;transform:scaleX(1.0400);transform-origin:0 50%;">Y</span>
<div style="left:2296px;top:223.4px;width:116.3px;height:22.6px;background:#2a2a2a;border-radius:3px;border:1px solid #212121;border-top-color:#0d0d0d;box-sizing:border-box;"></div>
<span style="left:2299.2px;top:225.7px;line-height:20px;font-size:15.4px;color:#d2d2d2;transform:scaleX(1.0400);transform-origin:0 50%;">2</span>
<span style="left:2419px;top:225.1px;line-height:20px;font-size:15.4px;color:#c4c4c4;transform:scaleX(1.0400);transform-origin:0 50%;">Z</span>
<div style="left:2438.3px;top:223.4px;width:116.1px;height:22.6px;background:#2a2a2a;border-radius:3px;border:1px solid #212121;border-top-color:#0d0d0d;box-sizing:border-box;"></div>
<span style="left:2441.5px;top:225.7px;line-height:20px;font-size:15.4px;color:#d2d2d2;transform:scaleX(1.0400);transform-origin:0 50%;">0</span>
<span style="left:1858.8px;top:250px;line-height:20px;font-size:15.4px;color:#c4c4c4;transform:scaleX(1.0400);transform-origin:0 50%;">Rotation</span>
<span style="left:2135.5px;top:250px;line-height:20px;font-size:15.4px;color:#c4c4c4;transform:scaleX(1.0400);transform-origin:0 50%;">X</span>
<div style="left:2155.3px;top:248.3px;width:116px;height:22.6px;background:#2a2a2a;border-radius:3px;border:1px solid #212121;border-top-color:#0d0d0d;box-sizing:border-box;"></div>
<span style="left:2158.5px;top:250.6px;line-height:20px;font-size:15.4px;color:#d2d2d2;transform:scaleX(1.0400);transform-origin:0 50%;">0</span>
<span style="left:2277.8px;top:250px;line-height:20px;font-size:15.4px;color:#c4c4c4;transform:scaleX(1.0400);transform-origin:0 50%;">Y</span>
<div style="left:2296px;top:248.3px;width:116.3px;height:22.6px;background:#2a2a2a;border-radius:3px;border:1px solid #212121;border-top-color:#0d0d0d;box-sizing:border-box;"></div>
<span style="left:2299.2px;top:250.6px;line-height:20px;font-size:15.4px;color:#d2d2d2;transform:scaleX(1.0400);transform-origin:0 50%;">0</span>
<span style="left:2419px;top:250px;line-height:20px;font-size:15.4px;color:#c4c4c4;transform:scaleX(1.0400);transform-origin:0 50%;">Z</span>
<div style="left:2438.3px;top:248.3px;width:116.1px;height:22.6px;background:#2a2a2a;border-radius:3px;border:1px solid #212121;border-top-color:#0d0d0d;box-sizing:border-box;"></div>
<span style="left:2441.5px;top:250.6px;line-height:20px;font-size:15.4px;color:#d2d2d2;transform:scaleX(1.0400);transform-origin:0 50%;">0</span>
<span style="left:1858.8px;top:274.9px;line-height:20px;font-size:15.4px;color:#c4c4c4;transform:scaleX(1.0400);transform-origin:0 50%;">Scale</span>
<span style="left:2135.5px;top:274.9px;line-height:20px;font-size:15.4px;color:#c4c4c4;transform:scaleX(1.0400);transform-origin:0 50%;">X</span>
<div style="left:2155.3px;top:273.2px;width:116px;height:22.6px;background:#2a2a2a;border-radius:3px;border:1px solid #212121;border-top-color:#0d0d0d;box-sizing:border-box;"></div>
<span style="left:2158.5px;top:275.5px;line-height:20px;font-size:15.4px;color:#d2d2d2;transform:scaleX(1.0400);transform-origin:0 50%;">1</span>
<span style="left:2277.8px;top:274.9px;line-height:20px;font-size:15.4px;color:#c4c4c4;transform:scaleX(1.0400);transform-origin:0 50%;">Y</span>
<div style="left:2296px;top:273.2px;width:116.3px;height:22.6px;background:#2a2a2a;border-radius:3px;border:1px solid #212121;border-top-color:#0d0d0d;box-sizing:border-box;"></div>
<span style="left:2299.2px;top:275.5px;line-height:20px;font-size:15.4px;color:#d2d2d2;transform:scaleX(1.0400);transform-origin:0 50%;">1</span>
<span style="left:2419px;top:274.9px;line-height:20px;font-size:15.4px;color:#c4c4c4;transform:scaleX(1.0400);transform-origin:0 50%;">Z</span>
<div style="left:2438.3px;top:273.2px;width:116.1px;height:22.6px;background:#2a2a2a;border-radius:3px;border:1px solid #212121;border-top-color:#0d0d0d;box-sizing:border-box;"></div>
<span style="left:2441.5px;top:275.5px;line-height:20px;font-size:15.4px;color:#d2d2d2;transform:scaleX(1.0400);transform-origin:0 50%;">1</span>
<svg style="left:2108px;top:277.5px;" width="20" height="14" viewBox="0 0 20 14"><path d="M8.2 9.8H5.6A3.1 3.1 0 0 1 5.6 3.6H8.2M11.4 3.6H14A3.1 3.1 0 0 1 14 9.8H11.4M6.6 6.7H13" fill="none" stroke="#c4c4c4" stroke-width="1.5"/><path d="M3.6 .8 16 12.8" stroke="#383838" stroke-width="3.2"/><path d="M3.6 .8 16 12.8" stroke="#c4c4c4" stroke-width="1.3"/></svg>
<div style="left:1835px;top:307px;width:725px;height:1px;background:#1a1a1a;"></div>
<div style="left:1835px;top:308px;width:725px;height:26px;background:#3e3e3e;"></div>
<div style="left:1835px;top:334px;width:725px;height:1px;background:#303030;"></div>
<svg style="left:1843.2px;top:318px;" width="11" height="7" viewBox="0 0 11 7"><path d="M0 0H11L5.5 7Z" fill="#8a8a8a"/></svg>
<svg style="left:1861.5px;top:312px;" width="18" height="19" viewBox="0 0 18 19"><g transform="translate(0 -.7)"><rect x="4.56" y=".3" width="8.1" height="14.56" rx="4.05" fill="#aaf454"/><path d="M.52 3.81 3.6 3.27 3.22 6.24 .79 8.39ZM13.46 3.27 16.32 3.81 16.15 8.39 14 6.24ZM.68 13.51 6.72 18.37 .68 18.53ZM16.15 13.51V18.53L10.23 18.37Z" fill="#aaf454"/></g></svg>
<div style="left:1885.4px;top:312.6px;width:16.5px;height:16.5px;background:#2a2a2a;border-radius:3px;border:1px solid #1a1a1a;box-sizing:border-box"></div>
<svg style="left:1887.9px;top:315.6px;" width="12" height="11" viewBox="0 0 12 11"><path d="M1.4 5.8 4.6 9 10.6 1.8" fill="none" stroke="#e0e0e0" stroke-width="1.9"/></svg>
<span style="left:1910px;top:311.8px;line-height:20px;font-size:15.4px;color:#e4e4e4;font-weight:bold;transform:scaleX(1.0123);transform-origin:0 50%;">Character Controller</span>
<svg style="left:2486.7px;top:314px;" width="14" height="14" viewBox="0 0 14 14"><circle cx="7" cy="7" r="6.6" fill="#c4c4c4"/></svg>
<span style="left:2489.6px;top:315.7px;line-height:12px;font-size:11.5px;color:#3e3e3e;font-weight:bold;transform:scaleX(1.0400);transform-origin:0 50%;">?</span>
<svg style="left:2511.5px;top:314px;" width="15" height="14" viewBox="0 0 15 14"><path d="M0 3.4H6M9 3.4H15M0 10.4H3M6 10.4H15" stroke="#c4c4c4" stroke-width="1.5"/><path d="M8.4 .6V6.2M3.6 7.6V13.2" stroke="#c4c4c4" stroke-width="1.7"/></svg>
<svg style="left:2541.8px;top:314.3px;" width="4" height="13.4" viewBox="0 0 4 13.4"><circle cx="2" cy="2" r="1.4" fill="#c4c4c4"/><circle cx="2" cy="6.7" r="1.4" fill="#c4c4c4"/><circle cx="2" cy="11.4" r="1.4" fill="#c4c4c4"/></svg>
<span style="left:1858.8px;top:342px;line-height:20px;font-size:15.4px;color:#c4c4c4;transform:scaleX(1.0400);transform-origin:0 50%;">Slope Limit</span>
<div style="left:2136.4px;top:340.4px;width:418.2px;height:22.4px;background:#2a2a2a;border-radius:3px;border:1px solid #212121;border-top-color:#0d0d0d;box-sizing:border-box;"></div>
<span style="left:2139.5px;top:342.6px;line-height:20px;font-size:15.4px;color:#d2d2d2;transform:scaleX(1.0400);transform-origin:0 50%;">45</span>
<span style="left:1858.8px;top:367px;line-height:20px;font-size:15.4px;color:#c4c4c4;transform:scaleX(1.0400);transform-origin:0 50%;">Step Offset</span>
<div style="left:2136.4px;top:365.4px;width:418.2px;height:22.4px;background:#2a2a2a;border-radius:3px;border:1px solid #212121;border-top-color:#0d0d0d;box-sizing:border-box;"></div>
<span style="left:2139.5px;top:367.6px;line-height:20px;font-size:15.4px;color:#d2d2d2;transform:scaleX(1.0400);transform-origin:0 50%;">0.3</span>
<span style="left:1858.8px;top:392px;line-height:20px;font-size:15.4px;color:#c4c4c4;transform:scaleX(1.0400);transform-origin:0 50%;">Skin Width</span>
<div style="left:2136.4px;top:390.4px;width:418.2px;height:22.4px;background:#2a2a2a;border-radius:3px;border:1px solid #212121;border-top-color:#0d0d0d;box-sizing:border-box;"></div>
<span style="left:2139.5px;top:392.6px;line-height:20px;font-size:15.4px;color:#d2d2d2;transform:scaleX(1.0400);transform-origin:0 50%;">0.08</span>
<span style="left:1858.8px;top:417px;line-height:20px;font-size:15.4px;color:#c4c4c4;transform:scaleX(1.0400);transform-origin:0 50%;">Min Move Distance</span>
<div style="left:2136.4px;top:415.4px;width:418.2px;height:22.4px;background:#2a2a2a;border-radius:3px;border:1px solid #212121;border-top-color:#0d0d0d;box-sizing:border-box;"></div>
<span style="left:2139.5px;top:417.6px;line-height:20px;font-size:15.4px;color:#d2d2d2;transform:scaleX(1.0400);transform-origin:0 50%;">0.001</span>
<span style="left:1858.8px;top:442px;line-height:20px;font-size:15.4px;color:#c4c4c4;transform:scaleX(1.0400);transform-origin:0 50%;">Center</span>
<span style="left:2135.5px;top:442px;line-height:20px;font-size:15.4px;color:#c4c4c4;transform:scaleX(1.0400);transform-origin:0 50%;">X</span>
<div style="left:2155.3px;top:440.3px;width:116px;height:22.6px;background:#2a2a2a;border-radius:3px;border:1px solid #212121;border-top-color:#0d0d0d;box-sizing:border-box;"></div>
<span style="left:2158.5px;top:442.6px;line-height:20px;font-size:15.4px;color:#d2d2d2;transform:scaleX(1.0400);transform-origin:0 50%;">0</span>
<span style="left:2277.8px;top:442px;line-height:20px;font-size:15.4px;color:#c4c4c4;transform:scaleX(1.0400);transform-origin:0 50%;">Y</span>
<div style="left:2296px;top:440.3px;width:116.3px;height:22.6px;background:#2a2a2a;border-radius:3px;border:1px solid #212121;border-top-color:#0d0d0d;box-sizing:border-box;"></div>
<span style="left:2299.2px;top:442.6px;line-height:20px;font-size:15.4px;color:#d2d2d2;transform:scaleX(1.0400);transform-origin:0 50%;">0</span>
<span style="left:2419px;top:442px;line-height:20px;font-size:15.4px;color:#c4c4c4;transform:scaleX(1.0400);transform-origin:0 50%;">Z</span>
<div style="left:2438.3px;top:440.3px;width:116.1px;height:22.6px;background:#2a2a2a;border-radius:3px;border:1px solid #212121;border-top-color:#0d0d0d;box-sizing:border-box;"></div>
<span style="left:2441.5px;top:442.6px;line-height:20px;font-size:15.4px;color:#d2d2d2;transform:scaleX(1.0400);transform-origin:0 50%;">0</span>
<span style="left:1858.8px;top:467px;line-height:20px;font-size:15.4px;color:#c4c4c4;transform:scaleX(1.0400);transform-origin:0 50%;">Radius</span>
<div style="left:2136.4px;top:465.4px;width:418.2px;height:22.4px;background:#2a2a2a;border-radius:3px;border:1px solid #212121;border-top-color:#0d0d0d;box-sizing:border-box;"></div>
<span style="left:2139.5px;top:467.6px;line-height:20px;font-size:15.4px;color:#d2d2d2;transform:scaleX(1.0400);transform-origin:0 50%;">0.5</span>
<span style="left:1858.8px;top:492px;line-height:20px;font-size:15.4px;color:#c4c4c4;transform:scaleX(1.0400);transform-origin:0 50%;">Height</span>
<div style="left:2136.4px;top:490.4px;width:418.2px;height:22.4px;background:#2a2a2a;border-radius:3px;border:1px solid #212121;border-top-color:#0d0d0d;box-sizing:border-box;"></div>
<span style="left:2139.5px;top:492.6px;line-height:20px;font-size:15.4px;color:#d2d2d2;transform:scaleX(1.0400);transform-origin:0 50%;">2</span>
<svg style="left:1845.85px;top:521.5px;" width="7.5" height="10" viewBox="0 0 7.5 10"><path d="M0 0V10L7.5 5Z" fill="#8a8a8a"/></svg>
<span style="left:1858.8px;top:516.9px;line-height:20px;font-size:15.4px;color:#c4c4c4;transform:scaleX(1.0400);transform-origin:0 50%;">Layer Overrides</span>
<div style="left:1835px;top:548px;width:725px;height:1px;background:#1a1a1a;"></div>
<div style="left:1835px;top:549px;width:725px;height:26.3px;background:#3e3e3e;"></div>
<div style="left:1835px;top:575.3px;width:725px;height:1px;background:#303030;"></div>
<svg style="left:1843.2px;top:559.15px;" width="11" height="7" viewBox="0 0 11 7"><path d="M0 0H11L5.5 7Z" fill="#8a8a8a"/></svg>
<svg style="left:1861.5px;top:553.15px;" width="18" height="19" viewBox="0 0 18 19"><circle cx="9" cy="9" r="7.8" fill="#f2f2f2"/><path d="M10.4 2.2 5.2 9.8H8.6L7.4 15.8 12.8 7.8H9.4Z" fill="#2a8fe0"/></svg>
<div style="left:1885.4px;top:553.75px;width:16.5px;height:16.5px;background:#2a2a2a;border-radius:3px;border:1px solid #1a1a1a;box-sizing:border-box"></div>
<svg style="left:1887.9px;top:556.75px;" width="12" height="11" viewBox="0 0 12 11"><path d="M1.4 5.8 4.6 9 10.6 1.8" fill="none" stroke="#e0e0e0" stroke-width="1.9"/></svg>
<span style="left:1910px;top:552.95px;line-height:20px;font-size:15.4px;color:#e4e4e4;font-weight:bold;transform:scaleX(1.0120);transform-origin:0 50%;">Player Input</span>
<svg style="left:2486.7px;top:555.15px;" width="14" height="14" viewBox="0 0 14 14"><circle cx="7" cy="7" r="6.6" fill="#c4c4c4"/></svg>
<span style="left:2489.6px;top:556.85px;line-height:12px;font-size:11.5px;color:#3e3e3e;font-weight:bold;transform:scaleX(1.0400);transform-origin:0 50%;">?</span>
<svg style="left:2511.5px;top:555.15px;" width="15" height="14" viewBox="0 0 15 14"><path d="M0 3.4H6M9 3.4H15M0 10.4H3M6 10.4H15" stroke="#c4c4c4" stroke-width="1.5"/><path d="M8.4 .6V6.2M3.6 7.6V13.2" stroke="#c4c4c4" stroke-width="1.7"/></svg>
<svg style="left:2541.8px;top:555.45px;" width="4" height="13.4" viewBox="0 0 4 13.4"><circle cx="2" cy="2" r="1.4" fill="#c4c4c4"/><circle cx="2" cy="6.7" r="1.4" fill="#c4c4c4"/><circle cx="2" cy="11.4" r="1.4" fill="#c4c4c4"/></svg>
<span style="left:1858.8px;top:583.2px;line-height:20px;font-size:15.4px;color:#c4c4c4;transform:scaleX(1.0400);transform-origin:0 50%;">Actions</span>
<div style="left:2136.4px;top:582px;width:418.2px;height:21.8px;background:#2a2a2a;border-radius:3px;border:1px solid #212121;border-top-color:#0d0d0d;box-sizing:border-box;"></div>
<svg style="left:2142.4px;top:585.5px;" width="10" height="14" viewBox="0 0 10 14"><path d="M.6 .6H6.2L9.4 3.8V13.4H.6Z" fill="#e8e8e8"/><path d="M6.2 .6V3.8H9.4" fill="#b0b0b0"/></svg>
<span style="left:2155.7px;top:583.6px;line-height:20px;font-size:15.4px;color:#d2d2d2;transform:scaleX(1.0531);transform-origin:0 50%;">None (Input Action Asset)</span>
<div style="left:2531px;top:582.7px;width:22.6px;height:20.4px;background:#383838;border-radius:0 3px 3px 0"></div>
<svg style="left:2535px;top:585.4px;" width="15" height="15" viewBox="0 0 15 15"><circle cx="7.5" cy="7.5" r="6" fill="none" stroke="#c4c4c4" stroke-width="1.3"/><circle cx="7.5" cy="7.5" r="2" fill="#c4c4c4"/></svg>
<div style="left:1857.5px;top:606.5px;width:696.5px;height:46.8px;background:#404040;border-radius:3px;border:1px solid #232323;box-sizing:border-box"></div>
<svg style="left:1863.5px;top:612px;" width="33" height="35" viewBox="0 0 33 35"><circle cx="15.4" cy="15.6" r="15" fill="#f4f4f4"/><path d="M19 28 29.6 34 27.4 22Z" fill="#f4f4f4"/><rect x="13.5" y="6.2" width="3.8" height="13.6" rx="1.9" fill="#404040"/><circle cx="15.4" cy="24" r="2.3" fill="#404040"/></svg>
<span style="left:1900.8px;top:614.7px;line-height:15px;font-size:12.5px;color:#bcbcbc;transform:scaleX(1.1637);transform-origin:0 50%;">There are no input actions associated with this input component yet. Click the button below to create</span>
<span style="left:1900.8px;top:629.7px;line-height:15px;font-size:12.5px;color:#bcbcbc;transform:scaleX(1.1580);transform-origin:0 50%;">a new set of input actions or drag an existing input actions asset into the field above.</span>
<div style="left:2405.8px;top:660px;width:148.2px;height:21px;background:#585858;border-radius:3px;border:1px solid #303030;box-sizing:border-box"></div>
<span style="left:2420.6px;top:660.4px;line-height:20px;font-size:15.4px;color:#e4e4e4;transform:scaleX(1.0488);transform-origin:0 50%;">Create Actions...</span>
<span style="left:1858.8px;top:690.8px;line-height:20px;font-size:15.4px;color:#c4c4c4;transform:scaleX(1.0400);transform-origin:0 50%;">UI Input Module</span>
<div style="left:2136.4px;top:689.4px;width:418.2px;height:21.8px;background:#2a2a2a;border-radius:3px;border:1px solid #212121;border-top-color:#0d0d0d;box-sizing:border-box;"></div>
<span style="left:2139.5px;top:691px;line-height:20px;font-size:15.4px;color:#d2d2d2;transform:scaleX(1.0374);transform-origin:0 50%;">None (Input System UI Input Module)</span>
<div style="left:2531px;top:690.1px;width:22.6px;height:20.4px;background:#383838;border-radius:0 3px 3px 0"></div>
<svg style="left:2535px;top:692.8px;" width="15" height="15" viewBox="0 0 15 15"><circle cx="7.5" cy="7.5" r="6" fill="none" stroke="#c4c4c4" stroke-width="1.3"/><circle cx="7.5" cy="7.5" r="2" fill="#c4c4c4"/></svg>
<span style="left:1858.8px;top:715.8px;line-height:20px;font-size:15.4px;color:#c4c4c4;transform:scaleX(1.0400);transform-origin:0 50%;">Camera</span>
<div style="left:2136.4px;top:714.4px;width:418.2px;height:21.8px;background:#2a2a2a;border-radius:3px;border:1px solid #212121;border-top-color:#0d0d0d;box-sizing:border-box;"></div>
<span style="left:2139.5px;top:716px;line-height:20px;font-size:15.4px;color:#d2d2d2;transform:scaleX(1.0234);transform-origin:0 50%;">None (Camera)</span>
<div style="left:2531px;top:715.1px;width:22.6px;height:20.4px;background:#383838;border-radius:0 3px 3px 0"></div>
<svg style="left:2535px;top:717.8px;" width="15" height="15" viewBox="0 0 15 15"><circle cx="7.5" cy="7.5" r="6" fill="none" stroke="#c4c4c4" stroke-width="1.3"/><circle cx="7.5" cy="7.5" r="2" fill="#c4c4c4"/></svg>
<span style="left:1858.8px;top:740.8px;line-height:20px;font-size:15.4px;color:#c4c4c4;transform:scaleX(1.0400);transform-origin:0 50%;">Behavior</span>
<div style="left:2136.4px;top:740px;width:418.2px;height:21px;background:#515151;border-radius:3px;border:1px solid #303030;box-sizing:border-box"></div>
<span style="left:2140.7px;top:740.2px;line-height:20px;font-size:15.4px;color:#d2d2d2;transform:scaleX(1.0460);transform-origin:0 50%;">Send Messages</span>
<svg style="left:2537.8px;top:748px;" width="9" height="5" viewBox="0 0 9 5"><path d="M0 0H9L4.5 5Z" fill="#c4c4c4"/></svg>
<div style="left:1857.5px;top:765px;width:696.5px;height:21.2px;background:#404040;border-radius:3px;border:1px solid #232323;box-sizing:border-box"></div>
<span style="left:1861.2px;top:767.7px;line-height:15px;font-size:12.5px;color:#bcbcbc;transform:scaleX(1.1179);transform-origin:0 50%;">Will SendMessage() to GameObject: OnDeviceLost, OnDeviceRegained, OnControlsChanged</span>
<div style="left:1857.5px;top:789.9px;width:340.5px;height:21.1px;background:#585858;border-radius:3px;border:1px solid #303030;box-sizing:border-box"></div>
<span style="left:1956.6px;top:790.4px;line-height:20px;font-size:15.4px;color:#e4e4e4;transform:scaleX(1.0395);transform-origin:0 50%;">Open Input Settings</span>
<div style="left:2203px;top:789.9px;width:351px;height:21.1px;background:#585858;border-radius:3px;border:1px solid #303030;box-sizing:border-box"></div>
<span style="left:2301.5px;top:790.4px;line-height:20px;font-size:15.4px;color:#e4e4e4;transform:scaleX(1.0330);transform-origin:0 50%;">Open Input Debugger</span>
<div style="left:1835px;top:823px;width:725px;height:1.2px;background:#1a1a1a;"></div>
<div style="left:2054.9px;top:834.9px;width:285.5px;height:28.1px;background:#585858;border-radius:3px;border:1px solid #303030;box-sizing:border-box"></div>
<span style="left:2138.6px;top:839.8px;line-height:20px;font-size:15.4px;color:#e4e4e4;transform:scaleX(1.0432);transform-origin:0 50%;">Add Component</span>
<div style="left:1828.9px;top:292.1px;width:268.5px;height:56.9px;border:5.5px solid #00eeff;border-radius:5.5px;box-sizing:border-box"></div>
<div style="left:1822.6px;top:529.7px;width:210.2px;height:54px;border:5.4px solid #00eeff;border-radius:5.5px;box-sizing:border-box"></div>
<div style="left:2333.1px;top:924.9px;width:172.7px;height:30.1px;background:#060606;border-radius:6.5px;border:2px solid #e2e2e2;box-sizing:border-box;box-shadow:0 3px 6px rgba(0,0,0,.55)"></div>
<svg style="left:2330px;top:860px" width="230" height="100" viewBox="2330 860 230 100"><defs><linearGradient id="flm" gradientUnits="userSpaceOnUse" x1="2490" y1="940" x2="2550" y2="868"><stop offset="0" stop-color="#10a8f0"/><stop offset=".45" stop-color="#1c84d8"/><stop offset="1" stop-color="#2a4ea8"/></linearGradient><clipPath id="imec"><rect x="2334.6" y="926.4" width="169.6" height="27" rx="5"/></clipPath></defs><g clip-path="url(#imec)"><path d="M2372 926 2352 953 2380 953 2400 926Z M2428 926 2408 953 2432 953 2452 926Z" fill="#161616"/><path d="M2440 926H2505V954H2470L2452 940Z" fill="#0a1220"/><path d="M2456.2 947.6 2466 943 2478 946 2488 954H2458Z" fill="#f0d8c4"/><path d="M2452 938Q2462 932 2474 940L2470 946Q2462 940 2455 944Z" fill="#1a2a58"/><ellipse cx="2463.4" cy="942.2" rx="4.6" ry="3" fill="#3aa4ec"/><ellipse cx="2462.6" cy="941.4" rx="1.6" ry="1.2" fill="#d8f0ff"/><path d="M2472 928 2500 954H2488L2462 930Z" fill="#060a12"/><path d="M2490 948 2500 946 2504 954H2492Z" fill="#e8cdb8"/><ellipse cx="2494.6" cy="941.6" rx="7" ry="5" fill="#2c9cf0"/><ellipse cx="2494" cy="941" rx="3" ry="2" fill="#a8e0ff"/></g><path d="M2483.4 931 2494.1 918.1 2500 912.3 2514.6 907.4 2520.4 904.5 2518.4 900.6 2513.6 897.7 2524.3 891.8 2538.9 884 2546.7 875.3 2550.7 866.5 2548.6 878.2 2541.8 887 2529.1 893.8 2523.3 897.7 2526.2 904.5 2520.4 912.3 2507.7 918.1 2503.9 923.9 2502.9 933.7 2500 942.4 2487.3 942.4Z" fill="url(#flm)"/><path d="M2484 930Q2486 915 2494 902Q2490 918 2490 932Z" fill="#1c90e0"/><path d="M2504 925Q2520 920 2544 915Q2526 924 2506 929Z" fill="#2468c0"/><path d="M2377.4 931.7A8.8 8.8 0 1 1 2369.4 944.4A10.5 10.5 0 0 0 2377.4 931.7Z" fill="#f4f4f4"/><circle cx="2398.3" cy="937" r="2.4" fill="none" stroke="#f4f4f4" stroke-width="1.3"/><path d="M2407.6 943.2 2404 949.4" stroke="#f4f4f4" stroke-width="2.2"/></svg>
<span style="left:2341.4px;top:928.6px;line-height:24px;font-size:19.5px;color:#fff;font-weight:bold;font-family:'Liberation Sans','Noto Sans CJK SC',sans-serif;">中</span>
<span style="left:2420.6px;top:928.6px;line-height:24px;font-size:19.5px;color:#fff;font-weight:bold;font-family:'Liberation Sans','Noto Sans CJK SC',sans-serif;">键</span>
</body></html>
